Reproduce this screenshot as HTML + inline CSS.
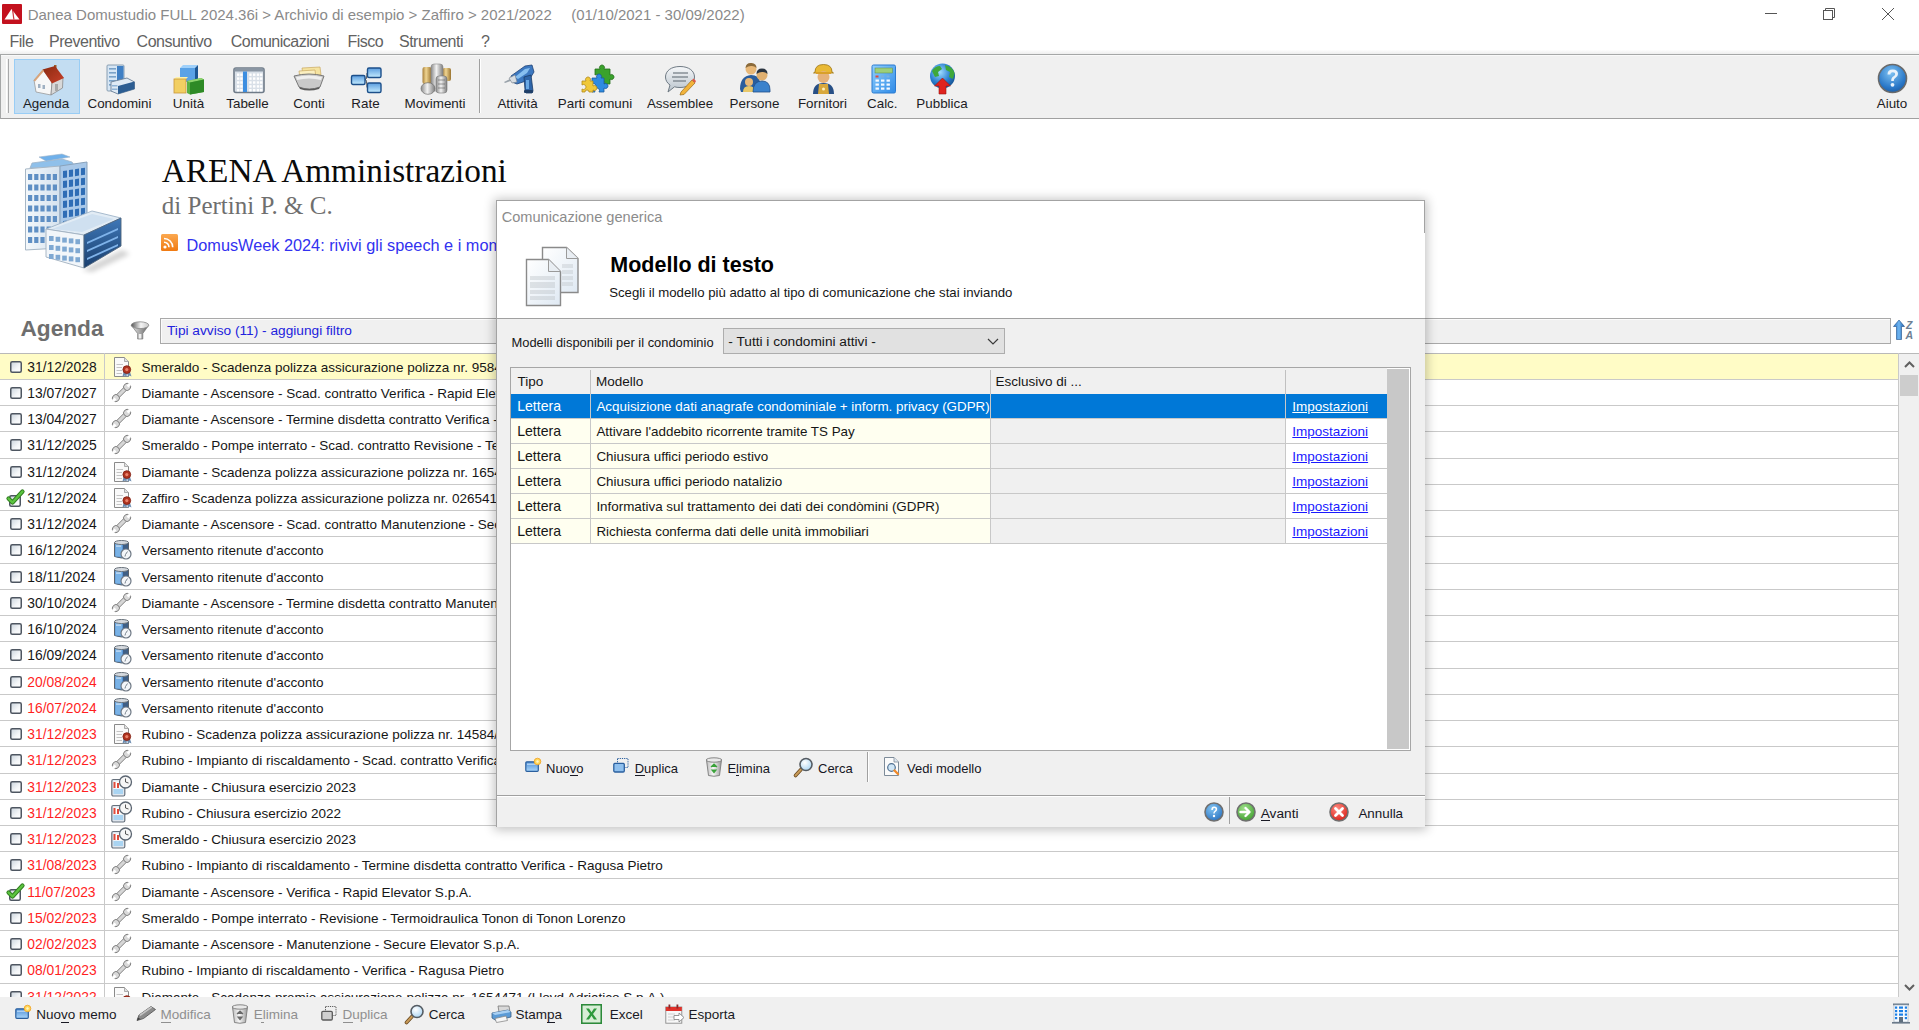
<!DOCTYPE html><html><head><meta charset="utf-8"><style>
html,body{margin:0;padding:0;}
body{width:1919px;height:1030px;overflow:hidden;position:relative;background:#fff;font-family:"Liberation Sans", sans-serif;}
.t{position:absolute;white-space:nowrap;}
svg{overflow:visible}
</style></head><body>
<svg style="position:absolute;left:2px;top:4px" width="20" height="20" viewBox="0 0 20 20"><rect x="0" y="0" width="20" height="20" rx="1" fill="#c3111e"/><polygon points="2.5,15.5 9.5,5 17.5,15.5" fill="#fff"/><polygon points="10,6 11.2,6 12.5,15.5 11.3,15.5" fill="#c3111e" opacity="0.85"/></svg>
<div class="t" style="left:27.70px;top:7.30px;font-size:15px;line-height:15px;color:#8a8a8a;font-weight:400;font-family:'Liberation Sans', sans-serif;">Danea Domustudio FULL 2024.36i &gt; Archivio di esempio &gt; Zaffiro &gt; 2021/2022</div>
<div class="t" style="left:571.20px;top:7.30px;font-size:15px;line-height:15px;color:#8a8a8a;font-weight:400;font-family:'Liberation Sans', sans-serif;">(01/10/2021 - 30/09/2022)</div>
<div style="position:absolute;left:1765px;top:13px;width:12px;height:1px;background:#555"></div>
<svg style="position:absolute;left:1822px;top:7px" width="14" height="14" viewBox="0 0 14 14"><rect x="1.5" y="3.5" width="9" height="9" fill="none" stroke="#555" stroke-width="1"/><polyline points="3.5,3.5 3.5,1.5 12.5,1.5 12.5,10.5 10.5,10.5" fill="none" stroke="#555" stroke-width="1"/></svg>
<svg style="position:absolute;left:1881px;top:7px" width="14" height="14" viewBox="0 0 14 14"><line x1="1" y1="1" x2="13" y2="13" stroke="#555" stroke-width="1"/><line x1="13" y1="1" x2="1" y2="13" stroke="#555" stroke-width="1"/></svg>
<div class="t" style="left:9.50px;top:33.66px;font-size:16px;line-height:16px;color:#626262;font-weight:400;font-family:'Liberation Sans', sans-serif;letter-spacing:-0.5px;">File</div>
<div class="t" style="left:49.10px;top:33.66px;font-size:16px;line-height:16px;color:#626262;font-weight:400;font-family:'Liberation Sans', sans-serif;letter-spacing:-0.5px;">Preventivo</div>
<div class="t" style="left:136.60px;top:33.66px;font-size:16px;line-height:16px;color:#626262;font-weight:400;font-family:'Liberation Sans', sans-serif;letter-spacing:-0.5px;">Consuntivo</div>
<div class="t" style="left:230.70px;top:33.66px;font-size:16px;line-height:16px;color:#626262;font-weight:400;font-family:'Liberation Sans', sans-serif;letter-spacing:-0.5px;">Comunicazioni</div>
<div class="t" style="left:347.50px;top:33.66px;font-size:16px;line-height:16px;color:#626262;font-weight:400;font-family:'Liberation Sans', sans-serif;letter-spacing:-0.5px;">Fisco</div>
<div class="t" style="left:399.00px;top:33.66px;font-size:16px;line-height:16px;color:#626262;font-weight:400;font-family:'Liberation Sans', sans-serif;letter-spacing:-0.5px;">Strumenti</div>
<div class="t" style="left:481.00px;top:33.66px;font-size:16px;line-height:16px;color:#626262;font-weight:400;font-family:'Liberation Sans', sans-serif;letter-spacing:-0.5px;">?</div>
<div style="position:absolute;left:0px;top:50px;width:1919px;height:4px;background:linear-gradient(#fdfdfd,#eeeeee)"></div>
<div style="position:absolute;left:0px;top:54px;width:1919px;height:1px;background:#a5a7a7"></div>
<div style="position:absolute;left:0px;top:55px;width:1919px;height:63px;background:#f0f0f0"></div>
<div style="position:absolute;left:0px;top:55px;width:1919px;height:1px;background:#f9f9f9"></div>
<div style="position:absolute;left:0px;top:118px;width:1919px;height:1px;background:#a0a0a0"></div>
<div style="position:absolute;left:0px;top:54px;width:1px;height:65px;background:#a5a7a7"></div>
<div style="position:absolute;left:6px;top:59px;width:1px;height:54px;background:#ffffff"></div>
<div style="position:absolute;left:8px;top:59px;width:1px;height:54px;background:#a8a9aa"></div>
<div style="position:absolute;left:14px;top:59px;width:66px;height:55px;background:#c3ddf2;box-sizing:border-box;border:1px solid #99cdf5"></div>
<div style="position:absolute;left:479px;top:59px;width:1px;height:54px;background:#a0a0a0"></div>
<div style="position:absolute;left:480px;top:59px;width:1px;height:54px;background:#ffffff"></div>
<div class="t" style="left:-14px;width:120px;text-align:center;top:97.26px;font-size:13.4px;line-height:13.4px;color:#1c1c24">Agenda</div>
<div class="t" style="left:59.5px;width:120px;text-align:center;top:97.26px;font-size:13.4px;line-height:13.4px;color:#1c1c24">Condomini</div>
<div class="t" style="left:128.5px;width:120px;text-align:center;top:97.26px;font-size:13.4px;line-height:13.4px;color:#1c1c24">Unità</div>
<div class="t" style="left:187.5px;width:120px;text-align:center;top:97.26px;font-size:13.4px;line-height:13.4px;color:#1c1c24">Tabelle</div>
<div class="t" style="left:249px;width:120px;text-align:center;top:97.26px;font-size:13.4px;line-height:13.4px;color:#1c1c24">Conti</div>
<div class="t" style="left:305.5px;width:120px;text-align:center;top:97.26px;font-size:13.4px;line-height:13.4px;color:#1c1c24">Rate</div>
<div class="t" style="left:375px;width:120px;text-align:center;top:97.26px;font-size:13.4px;line-height:13.4px;color:#1c1c24">Movimenti</div>
<div class="t" style="left:457.5px;width:120px;text-align:center;top:97.26px;font-size:13.4px;line-height:13.4px;color:#1c1c24">Attività</div>
<div class="t" style="left:535px;width:120px;text-align:center;top:97.26px;font-size:13.4px;line-height:13.4px;color:#1c1c24">Parti comuni</div>
<div class="t" style="left:620px;width:120px;text-align:center;top:97.26px;font-size:13.4px;line-height:13.4px;color:#1c1c24">Assemblee</div>
<div class="t" style="left:694.5px;width:120px;text-align:center;top:97.26px;font-size:13.4px;line-height:13.4px;color:#1c1c24">Persone</div>
<div class="t" style="left:762.5px;width:120px;text-align:center;top:97.26px;font-size:13.4px;line-height:13.4px;color:#1c1c24">Fornitori</div>
<div class="t" style="left:822.3px;width:120px;text-align:center;top:97.26px;font-size:13.4px;line-height:13.4px;color:#1c1c24">Calc.</div>
<div class="t" style="left:882px;width:120px;text-align:center;top:97.26px;font-size:13.4px;line-height:13.4px;color:#1c1c24">Pubblica</div>
<div class="t" style="left:1832px;width:120px;text-align:center;top:97.26px;font-size:13.4px;line-height:13.4px;color:#1c1c24">Aiuto</div>
<svg style="position:absolute;left:33px;top:64px" width="32" height="32" viewBox="0 0 32 32"><defs><linearGradient id="roof" x1="0" y1="0" x2="1" y2="1"><stop offset="0" stop-color="#8a2a10"/><stop offset="1" stop-color="#c8402a"/></linearGradient></defs><rect x="21" y="1" width="2.5" height="6" fill="#9b5b2a"/><polygon points="1,16 10,6 19,18 18,31 3,28" fill="#f7f7f7" stroke="#9a9a9a" stroke-width="0.8"/><polygon points="19,18 30,13 29.5,24 18,31" fill="#d8d8d8" stroke="#8a8a8a" stroke-width="0.8"/><polygon points="9.5,5.5 22,2 31,14 19,19.5" fill="url(#roof)"/><polygon points="0.5,16.5 9.5,5.5 11,7 2,17.5" fill="#d9a47a"/><rect x="5" y="20" width="2.5" height="4" fill="#9fb0c2"/><rect x="9.5" y="21" width="2.5" height="4" fill="#9fb0c2"/><rect x="22" y="20" width="3" height="7" fill="#a8a8a8"/></svg>
<svg style="position:absolute;left:106px;top:63px" width="29" height="32" viewBox="0 0 29 32"><rect x="1" y="2" width="17" height="26" rx="1" fill="#d6e6f5" stroke="#7f95aa" stroke-width="0.9"/><rect x="11" y="3" width="6.5" height="24" fill="#3f7fc4"/><g fill="#7aa2c8"><rect x="3" y="5" width="7" height="1.6"/><rect x="3" y="9" width="7" height="1.6"/><rect x="3" y="13" width="7" height="1.6"/><rect x="3" y="17" width="7" height="1.6"/><rect x="3" y="21" width="7" height="1.6"/></g><polygon points="5,19 21,15 28.5,19 28.5,26 12,31 5,28" fill="#dfeaf5" stroke="#6b8097" stroke-width="0.9"/><polygon points="12,23 28.5,18.5 28.5,26 12,31" fill="#2c5d92"/><g fill="#8fb3d6"><rect x="6" y="22" width="5.5" height="1.5"/><rect x="6" y="25.5" width="5.5" height="1.5"/></g></svg>
<svg style="position:absolute;left:173px;top:64px" width="32" height="31" viewBox="0 0 32 31"><polygon points="7,4 10,1 25,1 22,4" fill="#9fd0fa"/><rect x="7" y="4" width="15" height="14" fill="#5aa2e6"/><polygon points="22,4 25,1 25,15 22,18" fill="#1d5794"/><polygon points="1,15 3,13 15,13 13,15" fill="#fff2a8"/><rect x="1" y="15" width="12" height="14" fill="#f2cf62" stroke="#c9963a" stroke-width="0.8"/><polygon points="14,17 28,14 31,15.5 31,28 17,30.5 14,29" fill="#57b043"/><polygon points="14,17 28,14 31,15.5 17,18.5" fill="#8ed46f"/><polygon points="17,18.5 31,15.5 31,28 17,30.5" fill="#2e8a26"/></svg>
<svg style="position:absolute;left:233px;top:67px" width="32" height="27" viewBox="0 0 32 27"><rect x="1" y="1" width="30" height="24.5" rx="2" fill="#d9e0e8" stroke="#6f7b88" stroke-width="1.6"/><rect x="1.5" y="1.5" width="29" height="3" fill="#8a96a3"/><rect x="10" y="4.5" width="4" height="20.5" fill="#3d8ee0"/><g fill="#ffffff"><rect x="4" y="6.5" width="2.4" height="2.4"/><rect x="4" y="10.4" width="2.4" height="2.4"/><rect x="4" y="14.3" width="2.4" height="2.4"/><rect x="4" y="18.2" width="2.4" height="2.4"/><rect x="4" y="22" width="2.4" height="2.4"/><rect x="7.2" y="6.5" width="2.4" height="2.4"/><rect x="7.2" y="10.4" width="2.4" height="2.4"/><rect x="7.2" y="14.3" width="2.4" height="2.4"/><rect x="7.2" y="18.2" width="2.4" height="2.4"/><rect x="7.2" y="22" width="2.4" height="2.4"/><rect x="16.2" y="6.5" width="2.4" height="2.4"/><rect x="16.2" y="10.4" width="2.4" height="2.4"/><rect x="16.2" y="14.3" width="2.4" height="2.4"/><rect x="16.2" y="18.2" width="2.4" height="2.4"/><rect x="16.2" y="22" width="2.4" height="2.4"/><rect x="20" y="6.5" width="2.4" height="2.4"/><rect x="20" y="10.4" width="2.4" height="2.4"/><rect x="20" y="14.3" width="2.4" height="2.4"/><rect x="20" y="18.2" width="2.4" height="2.4"/><rect x="20" y="22" width="2.4" height="2.4"/><rect x="23.8" y="6.5" width="2.4" height="2.4"/><rect x="23.8" y="10.4" width="2.4" height="2.4"/><rect x="23.8" y="14.3" width="2.4" height="2.4"/><rect x="23.8" y="18.2" width="2.4" height="2.4"/><rect x="23.8" y="22" width="2.4" height="2.4"/><rect x="27" y="6.5" width="2.4" height="2.4"/><rect x="27" y="10.4" width="2.4" height="2.4"/><rect x="27" y="14.3" width="2.4" height="2.4"/><rect x="27" y="18.2" width="2.4" height="2.4"/><rect x="27" y="22" width="2.4" height="2.4"/></g></svg>
<svg style="position:absolute;left:293px;top:66px" width="32" height="25" viewBox="0 0 32 25"><polygon points="9,2 27,1 28,9 10,10" fill="#f5e3a0" stroke="#c8a860" stroke-width="0.7"/><polygon points="6,5 22,4 23,12 7,13" fill="#fbefc0" stroke="#c8a860" stroke-width="0.7"/><path d="M1 10 Q16 6 31 10 L27 21 Q16 25 6 21 Z" fill="#c9c9c9" stroke="#6e6e6e" stroke-width="0.9"/><path d="M3 11 Q16 8 29 11 L28 14 Q16 11 4 14 Z" fill="#efefef"/><path d="M6 21 Q16 25 27 21 L26 23 Q16 26 7 23 Z" fill="#5a5a5a"/></svg>
<svg style="position:absolute;left:350px;top:66px" width="33" height="28" viewBox="0 0 33 28"><path d="M15 13.5 Q17 13.5 17 7 L18 7 M15 13.5 Q17 13.5 17 21.5 L18 21.5" stroke="#4a4a4a" stroke-width="1" fill="none"/><defs><linearGradient id="rb" x1="0" y1="0" x2="0" y2="1"><stop offset="0" stop-color="#5b9ddf"/><stop offset="1" stop-color="#c5ecff"/></linearGradient></defs><rect x="1.5" y="9.5" width="13.5" height="9" rx="1.5" fill="url(#rb)" stroke="#1c4f8a" stroke-width="1.4"/><rect x="17.5" y="2" width="13.5" height="9.5" rx="1.5" fill="url(#rb)" stroke="#1c4f8a" stroke-width="1.4"/><rect x="17.5" y="17" width="13.5" height="9.5" rx="1.5" fill="url(#rb)" stroke="#1c4f8a" stroke-width="1.4"/></svg>
<svg style="position:absolute;left:420px;top:63px" width="32" height="32" viewBox="0 0 32 32"><defs><linearGradient id="gold" x1="0" y1="0" x2="1" y2="0"><stop offset="0" stop-color="#a77f3a"/><stop offset="0.4" stop-color="#f0d592"/><stop offset="1" stop-color="#9a7430"/></linearGradient><linearGradient id="silv" x1="0" y1="0" x2="1" y2="0"><stop offset="0" stop-color="#8a8a8a"/><stop offset="0.45" stop-color="#f2f2f2"/><stop offset="1" stop-color="#7c7c7c"/></linearGradient></defs><rect x="2.5" y="4" width="9" height="17" rx="2" fill="url(#gold)"/><rect x="22.5" y="5" width="8.5" height="13" rx="2" fill="url(#gold)"/><rect x="11" y="1" width="12" height="27" rx="3" fill="url(#silv)" stroke="#8a8a8a" stroke-width="0.6"/><rect x="16" y="13" width="11" height="17" rx="3" fill="url(#silv)" stroke="#777" stroke-width="0.6"/><g stroke="#555" stroke-width="0.8" opacity="0.7"><line x1="18" y1="17" x2="25" y2="17"/><line x1="18" y1="21" x2="25" y2="21"/><line x1="18" y1="25" x2="25" y2="25"/></g><ellipse cx="8" cy="25.5" rx="7" ry="5.8" fill="url(#silv)" stroke="#6e6e6e" stroke-width="0.7"/></svg>
<svg style="position:absolute;left:503px;top:64px" width="32" height="30" viewBox="0 0 32 30"><polygon points="1,18 9,14 10,16 2,19" fill="#9aa3ab"/><polygon points="8,12 22,2 29,1 31,8 26,16 14,20 9,18" fill="#3c78c0" stroke="#1f4377" stroke-width="0.8"/><polygon points="12,13 22,5 27,4 24,9 15,15" fill="#87bff0"/><path d="M6 14 L12 11 L14 18 L9 19 Z" fill="#d8dde2" stroke="#7a838c" stroke-width="0.6"/><polygon points="21,13 28,11 30,27 29,29 23,29 22,26" fill="#2f66aa" stroke="#1b3b66" stroke-width="0.8"/><rect x="23" y="16" width="3" height="9" fill="#6aa8e4"/><rect x="21" y="26" width="9" height="3" rx="1" fill="#1f3f68"/></svg>
<svg style="position:absolute;left:580px;top:66px" width="33" height="28" viewBox="0 0 33 28"><path d="M15 3 h5 a2.5 2.5 0 1 1 4 0 h6 v6 a2.5 2.5 0 1 1 0 4 v5 h-6 a2.5 2.5 0 1 0 -4 0 h-5 v-5 a2.5 2.5 0 1 0 0 -4 Z" fill="#3aa22c" stroke="#23701a" stroke-width="0.8"/><path d="M12 12 h5 a2.5 2.5 0 1 1 4 0 h3 v6 a2.5 2.5 0 1 1 0 4 v4 h-5 a2.5 2.5 0 1 0 -4 0 h-3 v-4 a2.5 2.5 0 1 0 0 -4 Z" fill="#2f8be0" stroke="#1a5a9e" stroke-width="0.8"/><path d="M2 15 h4 a2.5 2.5 0 1 1 4 0 h3 v5 a2.5 2.5 0 1 1 0 4 v2 h-4 a2 2 0 1 0 -4 0 h-3 v-3 a2.5 2.5 0 1 0 0 -4 Z" fill="#f0c838" stroke="#b28a1a" stroke-width="0.8"/></svg>
<svg style="position:absolute;left:664px;top:65px" width="32" height="30" viewBox="0 0 32 30"><defs><linearGradient id="bub" x1="0" y1="0" x2="0" y2="1"><stop offset="0" stop-color="#f5f7f9"/><stop offset="1" stop-color="#b9c3cc"/></linearGradient></defs><path d="M16 1.5 C25 1.5 30.5 6 30.5 12 C30.5 18 25 22.5 16 22.5 C14 22.5 12 22.3 10.5 21.8 L4 27 L6 20 C3 18 1.5 15 1.5 12 C1.5 6 7 1.5 16 1.5 Z" fill="url(#bub)" stroke="#6f7a84" stroke-width="1"/><g stroke="#6e7780" stroke-width="1.2"><line x1="9" y1="8" x2="24" y2="8"/><line x1="8" y1="12" x2="24" y2="12"/><line x1="9" y1="16" x2="22" y2="16"/></g><polygon points="17,27 28,15 31,18 20,29.5 16,30" fill="#f2b33a" stroke="#9a6a16" stroke-width="0.7"/><polygon points="28,15 29.5,13.5 32,16 31,18" fill="#e05a4a"/></svg>
<svg style="position:absolute;left:739px;top:62px" width="32" height="32" viewBox="0 0 32 32"><circle cx="12" cy="7" r="5.5" fill="#e8b878"/><path d="M6.5 6 Q7 0.5 12.5 1 Q17.5 1.5 17.5 6 Q15 3.5 12 4 Q9 4 6.5 6Z" fill="#8a6a3a"/><path d="M1 27 Q1 14 12 13 Q20 13 21 20 L21 30 L2 30 Z" fill="#2a5d9c"/><circle cx="10" cy="20" r="4" fill="#e8b878"/><path d="M4 30 Q4 24 10 24 Q16 24 16 30 Z" fill="#e8c86a"/><circle cx="23" cy="13" r="5.5" fill="#e0b070"/><path d="M17.5 12 Q17.5 6.5 23 6.5 Q28.5 6.5 28.5 12 Q26 9.5 23 10 Q20 10 17.5 12Z" fill="#2a3440"/><path d="M14 30 Q14 19 23 19 Q31 19 31 28 L31 30 Z" fill="#3b82cc" stroke="#1f4f8a" stroke-width="0.8"/></svg>
<svg style="position:absolute;left:812px;top:63px" width="23" height="32" viewBox="0 0 23 32"><path d="M3 9 Q3 1.5 11.5 1.5 Q20 1.5 20 9 L21.5 10 L1.5 10 Z" fill="#e9b935" stroke="#9c7412" stroke-width="0.8"/><ellipse cx="11.5" cy="14" rx="6" ry="6" fill="#e6b27a"/><rect x="4" y="9" width="15" height="2" fill="#d9a02a"/><path d="M1 31 Q1 20 11.5 20 Q22 20 22 31 Z" fill="#274f86"/><path d="M6 31 L7 21 L16 21 L17 31 Z" fill="#d8a83c"/><circle cx="11.5" cy="26" r="1.5" fill="#fff2c0"/></svg>
<svg style="position:absolute;left:871px;top:64px" width="26" height="30" viewBox="0 0 26 30"><defs><linearGradient id="calc" x1="0" y1="0" x2="1" y2="1"><stop offset="0" stop-color="#8fd0ff"/><stop offset="1" stop-color="#2f8ae6"/></linearGradient></defs><rect x="1" y="1" width="23.5" height="28" rx="1.5" fill="url(#calc)" stroke="#2b7ad0" stroke-width="1"/><rect x="4" y="4" width="17.5" height="5" fill="#9ccf7a" stroke="#5f8a4a" stroke-width="0.5"/><rect x="4.5" y="11.5" width="3" height="2" fill="#e04a3a"/><rect x="10" y="11.5" width="3" height="2" fill="#7ab0e0"/><rect x="15.5" y="11.5" width="3" height="2" fill="#7ab0e0"/><g fill="#f4f9ff"><rect x="4.5" y="15.5" width="3.4" height="2.2"/><rect x="4.5" y="19.5" width="3.4" height="2.2"/><rect x="4.5" y="23.5" width="3.4" height="2.2"/><rect x="10" y="15.5" width="3.4" height="2.2"/><rect x="10" y="19.5" width="3.4" height="2.2"/><rect x="10" y="23.5" width="3.4" height="2.2"/><rect x="15.5" y="15.5" width="3.4" height="2.2"/><rect x="15.5" y="19.5" width="3.4" height="2.2"/><rect x="15.5" y="23.5" width="3.4" height="2.2"/></g></svg>
<svg style="position:absolute;left:929px;top:63px" width="27" height="32" viewBox="0 0 27 32"><defs><radialGradient id="glb" cx="0.4" cy="0.35" r="0.7"><stop offset="0" stop-color="#9fdcff"/><stop offset="0.6" stop-color="#2a7fd0"/><stop offset="1" stop-color="#16508e"/></radialGradient></defs><circle cx="13.5" cy="13" r="12.5" fill="url(#glb)"/><path d="M3 8 Q6 3 11 3 L13 6 L9 9 L10 13 L6 14 Z" fill="#3fa83a"/><path d="M16 2 Q23 3 25.5 10 L24 16 L20 14 L21 9 L17 7 Z" fill="#3fa83a"/><path d="M11 17 L15 16 L17 21 L13 24 Z" fill="#3fa83a"/><polygon points="13.5,15 21.5,23 17,23 17,31 10,31 10,23 5.5,23" fill="#e0231e" stroke="#9a1410" stroke-width="0.6"/></svg>
<svg style="position:absolute;left:1877px;top:63px" width="31" height="31" viewBox="0 0 31 31"><defs><radialGradient id="hlp" cx="0.45" cy="0.3" r="0.75"><stop offset="0" stop-color="#7ec2f2"/><stop offset="0.7" stop-color="#2a78c8"/><stop offset="1" stop-color="#1b5aa0"/></radialGradient></defs><circle cx="15.5" cy="15.5" r="14" fill="url(#hlp)" stroke="#6a6a6a" stroke-width="1.6"/><path d="M10.5 11.5 Q10.5 6.5 15.8 6.5 Q21 6.5 21 11 Q21 13.8 18 15.3 Q16.8 16 16.8 18 L14.2 18 Q14 14.6 16.6 13.2 Q18.2 12.3 18.2 11 Q18.2 9.2 15.8 9.2 Q13.4 9.2 13.3 11.5 Z" fill="#e8f2fb"/><circle cx="15.5" cy="21.8" r="1.9" fill="#e8f2fb"/></svg>
<svg style="position:absolute;left:22px;top:154px" width="110" height="118" viewBox="0 0 110 118"><defs><linearGradient id="bw" x1="0" y1="0" x2="1" y2="0"><stop offset="0" stop-color="#f4f8fb"/><stop offset="1" stop-color="#d5e2ee"/></linearGradient><linearGradient id="bs" x1="0" y1="0" x2="0" y2="1"><stop offset="0" stop-color="#3f78b8"/><stop offset="1" stop-color="#1a3f6e"/></linearGradient><filter id="shb" x="-30%" y="-50%" width="160%" height="200%"><feGaussianBlur stdDeviation="2.5"/></filter></defs><polygon points="60,116 100,96 108,100 70,118" fill="#000" opacity="0.18" filter="url(#shb)"/><polygon points="10,9 40,5 50,8 52,11 42,13 8,14" fill="#8fc0ea" stroke="#9fb4c8" stroke-width="0.8"/><polygon points="17,3 40,0 48,3 24,7" fill="#6fb0ea" stroke="#9fb4c8" stroke-width="0.6"/><polygon points="3.5,15 38,12 38,94 3.5,96" fill="url(#bw)" stroke="#a7b7c6" stroke-width="1"/><polygon points="38,12 65,8 65,76 38,82" fill="#a9c8e8" stroke="#8aa3bc" stroke-width="1"/><rect x="6.0" y="20.0" width="4.2" height="6" fill="#5f8fc4"/><rect x="6.0" y="30.5" width="4.2" height="6" fill="#5f8fc4"/><rect x="6.0" y="41.0" width="4.2" height="6" fill="#5f8fc4"/><rect x="6.0" y="51.5" width="4.2" height="6" fill="#5f8fc4"/><rect x="6.0" y="62.0" width="4.2" height="6" fill="#5f8fc4"/><rect x="6.0" y="72.5" width="4.2" height="6" fill="#5f8fc4"/><rect x="6.0" y="83.0" width="4.2" height="6" fill="#5f8fc4"/><rect x="12.2" y="20.0" width="4.2" height="6" fill="#5f8fc4"/><rect x="12.2" y="30.5" width="4.2" height="6" fill="#5f8fc4"/><rect x="12.2" y="41.0" width="4.2" height="6" fill="#5f8fc4"/><rect x="12.2" y="51.5" width="4.2" height="6" fill="#5f8fc4"/><rect x="12.2" y="62.0" width="4.2" height="6" fill="#5f8fc4"/><rect x="12.2" y="72.5" width="4.2" height="6" fill="#5f8fc4"/><rect x="12.2" y="83.0" width="4.2" height="6" fill="#5f8fc4"/><rect x="18.4" y="20.0" width="4.2" height="6" fill="#5f8fc4"/><rect x="18.4" y="30.5" width="4.2" height="6" fill="#5f8fc4"/><rect x="18.4" y="41.0" width="4.2" height="6" fill="#5f8fc4"/><rect x="18.4" y="51.5" width="4.2" height="6" fill="#5f8fc4"/><rect x="18.4" y="62.0" width="4.2" height="6" fill="#5f8fc4"/><rect x="18.4" y="72.5" width="4.2" height="6" fill="#5f8fc4"/><rect x="18.4" y="83.0" width="4.2" height="6" fill="#5f8fc4"/><rect x="24.6" y="20.0" width="4.2" height="6" fill="#5f8fc4"/><rect x="24.6" y="30.5" width="4.2" height="6" fill="#5f8fc4"/><rect x="24.6" y="41.0" width="4.2" height="6" fill="#5f8fc4"/><rect x="24.6" y="51.5" width="4.2" height="6" fill="#5f8fc4"/><rect x="24.6" y="62.0" width="4.2" height="6" fill="#5f8fc4"/><rect x="24.6" y="72.5" width="4.2" height="6" fill="#5f8fc4"/><rect x="24.6" y="83.0" width="4.2" height="6" fill="#5f8fc4"/><rect x="30.8" y="20.0" width="4.2" height="6" fill="#5f8fc4"/><rect x="30.8" y="30.5" width="4.2" height="6" fill="#5f8fc4"/><rect x="30.8" y="41.0" width="4.2" height="6" fill="#5f8fc4"/><rect x="30.8" y="51.5" width="4.2" height="6" fill="#5f8fc4"/><rect x="30.8" y="62.0" width="4.2" height="6" fill="#5f8fc4"/><rect x="30.8" y="72.5" width="4.2" height="6" fill="#5f8fc4"/><rect x="30.8" y="83.0" width="4.2" height="6" fill="#5f8fc4"/><polygon points="41,17.0 45,16.4 45,23.4 41,24.0" fill="#2f6db5"/><polygon points="41,27.0 45,26.4 45,33.4 41,34.0" fill="#2f6db5"/><polygon points="41,37.0 45,36.4 45,43.4 41,44.0" fill="#2f6db5"/><polygon points="41,47.0 45,46.4 45,53.4 41,54.0" fill="#2f6db5"/><polygon points="41,57.0 45,56.4 45,63.4 41,64.0" fill="#2f6db5"/><polygon points="41,67.0 45,66.4 45,73.4 41,74.0" fill="#2f6db5"/><polygon points="47,16.1 51,15.5 51,22.5 47,23.1" fill="#2f6db5"/><polygon points="47,26.1 51,25.5 51,32.5 47,33.1" fill="#2f6db5"/><polygon points="47,36.1 51,35.5 51,42.5 47,43.1" fill="#2f6db5"/><polygon points="47,46.1 51,45.5 51,52.5 47,53.1" fill="#2f6db5"/><polygon points="47,56.1 51,55.5 51,62.5 47,63.1" fill="#2f6db5"/><polygon points="47,66.1 51,65.5 51,72.5 47,73.1" fill="#2f6db5"/><polygon points="53,15.2 57,14.6 57,21.6 53,22.2" fill="#2f6db5"/><polygon points="53,25.2 57,24.6 57,31.6 53,32.2" fill="#2f6db5"/><polygon points="53,35.2 57,34.6 57,41.6 53,42.2" fill="#2f6db5"/><polygon points="53,45.2 57,44.6 57,51.6 53,52.2" fill="#2f6db5"/><polygon points="53,55.2 57,54.6 57,61.6 53,62.2" fill="#2f6db5"/><polygon points="53,65.2 57,64.6 57,71.6 53,72.2" fill="#2f6db5"/><polygon points="59,14.3 63,13.7 63,20.7 59,21.3" fill="#2f6db5"/><polygon points="59,24.3 63,23.7 63,30.7 59,31.3" fill="#2f6db5"/><polygon points="59,34.3 63,33.7 63,40.7 59,41.3" fill="#2f6db5"/><polygon points="59,44.3 63,43.7 63,50.7 59,51.3" fill="#2f6db5"/><polygon points="59,54.3 63,53.7 63,60.7 59,61.3" fill="#2f6db5"/><polygon points="59,64.3 63,63.7 63,70.7 59,71.3" fill="#2f6db5"/><polygon points="24,75 70,57 99,64 62,81" fill="#e2ecf5" stroke="#9fb4c8" stroke-width="0.9"/><polygon points="30,75 70,60 92,65 60,78" fill="#cfe0f0"/><polygon points="24,75 62,81 62,114 24,103" fill="#f2f6fa" stroke="#a0b0c0" stroke-width="0.9"/><polygon points="62,81 99,64 99,92 62,114" fill="url(#bs)" stroke="#4f647c" stroke-width="0.9"/><rect x="27.0" y="82.0" width="4.6" height="5" fill="#7fa8d2"/><rect x="27.0" y="91.0" width="4.6" height="5" fill="#7fa8d2"/><rect x="27.0" y="100.0" width="4.6" height="5" fill="#7fa8d2"/><rect x="33.6" y="82.8" width="4.6" height="5" fill="#7fa8d2"/><rect x="33.6" y="91.8" width="4.6" height="5" fill="#7fa8d2"/><rect x="33.6" y="100.8" width="4.6" height="5" fill="#7fa8d2"/><rect x="40.2" y="83.6" width="4.6" height="5" fill="#7fa8d2"/><rect x="40.2" y="92.6" width="4.6" height="5" fill="#7fa8d2"/><rect x="40.2" y="101.6" width="4.6" height="5" fill="#7fa8d2"/><rect x="46.8" y="84.4" width="4.6" height="5" fill="#7fa8d2"/><rect x="46.8" y="93.4" width="4.6" height="5" fill="#7fa8d2"/><rect x="46.8" y="102.4" width="4.6" height="5" fill="#7fa8d2"/><rect x="53.4" y="85.2" width="4.6" height="5" fill="#7fa8d2"/><rect x="53.4" y="94.2" width="4.6" height="5" fill="#7fa8d2"/><rect x="53.4" y="103.2" width="4.6" height="5" fill="#7fa8d2"/><polygon points="65,88 96,74 96,76 65,90" fill="#7fb3ea"/><polygon points="65,96 96,82 96,84 65,98" fill="#7fb3ea"/><polygon points="65,104 96,90 96,92 65,106" fill="#7fb3ea"/></svg>
<div class="t" style="left:161.80px;top:153.71px;font-size:33.3px;line-height:33.3px;color:#0a0a0a;font-weight:400;font-family:'Liberation Serif', serif;">ARENA Amministrazioni</div>
<div class="t" style="left:161.80px;top:193.06px;font-size:25px;line-height:25px;color:#6f6f6f;font-weight:400;font-family:'Liberation Serif', serif;">di Pertini P. &amp; C.</div>
<svg style="position:absolute;left:161px;top:234px" width="17" height="17" viewBox="0 0 17 17"><defs><linearGradient id="rss" x1="0" y1="0" x2="0" y2="1"><stop offset="0" stop-color="#fba84f"/><stop offset="1" stop-color="#f07a12"/></linearGradient></defs><rect x="0" y="0" width="17" height="17" rx="1.5" fill="url(#rss)"/><circle cx="4" cy="13" r="1.6" fill="#fff"/><path d="M3 8.2 A5 5 0 0 1 8 13.2" stroke="#fff" stroke-width="1.6" fill="none"/><path d="M3 4.5 A8.7 8.7 0 0 1 11.7 13.2" stroke="#fff" stroke-width="1.6" fill="none"/></svg>
<div class="t" style="left:186.50px;top:236.70px;font-size:16.3px;line-height:16.3px;color:#3232f0;font-weight:400;font-family:'Liberation Sans', sans-serif;">DomusWeek 2024: rivivi gli speech e i momenti più belli</div>
<div class="t" style="left:20.40px;top:316.88px;font-size:22.7px;line-height:22.7px;color:#6e6e6e;font-weight:700;font-family:'Liberation Sans', sans-serif;">Agenda</div>
<svg style="position:absolute;left:130px;top:320px" width="20" height="20" viewBox="0 0 20 20"><defs><linearGradient id="fun" x1="0" y1="0" x2="1" y2="0"><stop offset="0" stop-color="#555"/><stop offset="0.55" stop-color="#f4f4f4"/><stop offset="1" stop-color="#c8c8c8"/></linearGradient><linearGradient id="fun2" x1="0" y1="0" x2="1" y2="0"><stop offset="0" stop-color="#e8e8e8"/><stop offset="0.6" stop-color="#9a9a9a"/><stop offset="1" stop-color="#606060"/></linearGradient></defs><path d="M1.5 5.5 L18.5 5.5 L12.8 13.5 L12.8 19 L7.6 19 L7.6 13.5 Z" fill="url(#fun2)" stroke="#777" stroke-width="0.7"/><ellipse cx="10" cy="5.2" rx="8.8" ry="3.4" fill="url(#fun)" stroke="#8a8a8a" stroke-width="0.8"/><rect x="8.8" y="14" width="2.6" height="4.5" fill="#f0f0f0"/></svg>
<div style="position:absolute;left:160px;top:318px;width:1731px;height:26px;background:#f0f0f0;box-sizing:border-box;border:1px solid #a9a9a9;box-shadow:inset 1px 1px 0 #fbfbfb"></div>
<div class="t" style="left:167.00px;top:324.40px;font-size:13.7px;line-height:13.7px;color:#2222dd;font-weight:400;font-family:'Liberation Sans', sans-serif;">Tipi avviso (11) - aggiungi filtro</div>
<div style="position:absolute;left:0px;top:354px;width:1898px;height:25px;background:#fffcc6"></div>
<div style="position:absolute;left:0px;top:353px;width:1919px;height:1px;background:#b9b9b9"></div>
<div style="position:absolute;left:0px;top:379px;width:1898px;height:1px;background:#c9c9c9"></div>
<div style="position:absolute;left:0px;top:405px;width:1898px;height:1px;background:#c9c9c9"></div>
<div style="position:absolute;left:0px;top:431px;width:1898px;height:1px;background:#c9c9c9"></div>
<div style="position:absolute;left:0px;top:458px;width:1898px;height:1px;background:#c9c9c9"></div>
<div style="position:absolute;left:0px;top:484px;width:1898px;height:1px;background:#c9c9c9"></div>
<div style="position:absolute;left:0px;top:510px;width:1898px;height:1px;background:#c9c9c9"></div>
<div style="position:absolute;left:0px;top:536px;width:1898px;height:1px;background:#c9c9c9"></div>
<div style="position:absolute;left:0px;top:563px;width:1898px;height:1px;background:#c9c9c9"></div>
<div style="position:absolute;left:0px;top:589px;width:1898px;height:1px;background:#c9c9c9"></div>
<div style="position:absolute;left:0px;top:615px;width:1898px;height:1px;background:#c9c9c9"></div>
<div style="position:absolute;left:0px;top:641px;width:1898px;height:1px;background:#c9c9c9"></div>
<div style="position:absolute;left:0px;top:668px;width:1898px;height:1px;background:#c9c9c9"></div>
<div style="position:absolute;left:0px;top:694px;width:1898px;height:1px;background:#c9c9c9"></div>
<div style="position:absolute;left:0px;top:720px;width:1898px;height:1px;background:#c9c9c9"></div>
<div style="position:absolute;left:0px;top:746px;width:1898px;height:1px;background:#c9c9c9"></div>
<div style="position:absolute;left:0px;top:773px;width:1898px;height:1px;background:#c9c9c9"></div>
<div style="position:absolute;left:0px;top:799px;width:1898px;height:1px;background:#c9c9c9"></div>
<div style="position:absolute;left:0px;top:825px;width:1898px;height:1px;background:#c9c9c9"></div>
<div style="position:absolute;left:0px;top:851px;width:1898px;height:1px;background:#c9c9c9"></div>
<div style="position:absolute;left:0px;top:878px;width:1898px;height:1px;background:#c9c9c9"></div>
<div style="position:absolute;left:0px;top:904px;width:1898px;height:1px;background:#c9c9c9"></div>
<div style="position:absolute;left:0px;top:930px;width:1898px;height:1px;background:#c9c9c9"></div>
<div style="position:absolute;left:0px;top:956px;width:1898px;height:1px;background:#c9c9c9"></div>
<div style="position:absolute;left:0px;top:983px;width:1898px;height:1px;background:#c9c9c9"></div>
<div style="position:absolute;left:0px;top:1009px;width:1898px;height:1px;background:#c9c9c9"></div>
<div style="position:absolute;left:104px;top:353px;width:1px;height:644px;background:#c9c9c9"></div>
<div style="position:absolute;left:1898px;top:353px;width:1px;height:644px;background:#c9c9c9"></div>
<svg style="position:absolute;left:10px;top:360.5px" width="12" height="12" viewBox="0 0 12 12"><defs><linearGradient id="cbg" x1="0" y1="0" x2="1" y2="1"><stop offset="0" stop-color="#c9d3dc"/><stop offset="0.6" stop-color="#f4f6f8"/><stop offset="1" stop-color="#ffffff"/></linearGradient></defs><rect x="0.75" y="0.75" width="10.5" height="10.5" rx="1.5" fill="url(#cbg)" stroke="#4e5661" stroke-width="1.5"/></svg>
<div class="t" style="left:27.30px;top:360.58px;font-size:13.85px;line-height:13.85px;color:#161616;font-weight:400;font-family:'Liberation Sans', sans-serif;">31/12/2028</div>
<svg style="position:absolute;left:114px;top:356.5px" width="18" height="20" viewBox="0 0 18 20"><path d="M0.5 0.5 H10.5 L14.5 4.5 V19.5 H0.5 Z" fill="#fafafa" stroke="#8a8a8a" stroke-width="1"/><path d="M10.5 0.5 V4.5 H14.5" fill="#e0e0e0" stroke="#9a9a9a" stroke-width="0.8"/><g stroke="#c4c4c4" stroke-width="1"><line x1="2.5" y1="7.5" x2="9" y2="7.5"/><line x1="2.5" y1="10.5" x2="8" y2="10.5"/><line x1="2.5" y1="13.5" x2="8" y2="13.5"/><line x1="2.5" y1="16.5" x2="8" y2="16.5"/></g><path d="M9.5 15 L8.5 19.5 L11 18.5 L12.5 20 L13 15.5 Z M13 15.5 L14 20 L15.5 18.5 L17.5 19.5 L16 15 Z" fill="#6d8db0"/><circle cx="12.8" cy="12.6" r="3.9" fill="#b0341f" stroke="#7e1d10" stroke-width="0.8"/><circle cx="12.8" cy="12.6" r="1.6" fill="#e9826b"/></svg>
<div class="t" style="left:141.50px;top:360.87px;font-size:13.5px;line-height:13.5px;color:#161616;font-weight:400;font-family:'Liberation Sans', sans-serif;">Smeraldo - Scadenza polizza assicurazione polizza nr. 95841 (Generali Assicurazioni S.p.A.)</div>
<svg style="position:absolute;left:10px;top:386.5px" width="12" height="12" viewBox="0 0 12 12"><defs><linearGradient id="cbg" x1="0" y1="0" x2="1" y2="1"><stop offset="0" stop-color="#c9d3dc"/><stop offset="0.6" stop-color="#f4f6f8"/><stop offset="1" stop-color="#ffffff"/></linearGradient></defs><rect x="0.75" y="0.75" width="10.5" height="10.5" rx="1.5" fill="url(#cbg)" stroke="#4e5661" stroke-width="1.5"/></svg>
<div class="t" style="left:27.30px;top:386.58px;font-size:13.85px;line-height:13.85px;color:#161616;font-weight:400;font-family:'Liberation Sans', sans-serif;">13/07/2027</div>
<svg style="position:absolute;left:111px;top:381.5px" width="21" height="21" viewBox="0 0 21 21"><g transform="rotate(-45 10.5 10.5)"><rect x="3.5" y="8.6" width="14" height="3.8" fill="#d6d6d6" stroke="#7c7c7c" stroke-width="0.9"/><circle cx="2.6" cy="10.5" r="3.5" fill="#d9d9d9" stroke="#7c7c7c" stroke-width="0.9"/><circle cx="18.4" cy="10.5" r="3.5" fill="#d9d9d9" stroke="#7c7c7c" stroke-width="0.9"/><rect x="-1.5" y="9.2" width="3.5" height="2.6" fill="#ffffff"/><rect x="19" y="9.2" width="3.5" height="2.6" fill="#ffffff"/></g></svg>
<div class="t" style="left:141.50px;top:386.87px;font-size:13.5px;line-height:13.5px;color:#161616;font-weight:400;font-family:'Liberation Sans', sans-serif;">Diamante - Ascensore - Scad. contratto Verifica - Rapid Elevator S.p.A.</div>
<svg style="position:absolute;left:10px;top:412.5px" width="12" height="12" viewBox="0 0 12 12"><defs><linearGradient id="cbg" x1="0" y1="0" x2="1" y2="1"><stop offset="0" stop-color="#c9d3dc"/><stop offset="0.6" stop-color="#f4f6f8"/><stop offset="1" stop-color="#ffffff"/></linearGradient></defs><rect x="0.75" y="0.75" width="10.5" height="10.5" rx="1.5" fill="url(#cbg)" stroke="#4e5661" stroke-width="1.5"/></svg>
<div class="t" style="left:27.30px;top:412.58px;font-size:13.85px;line-height:13.85px;color:#161616;font-weight:400;font-family:'Liberation Sans', sans-serif;">13/04/2027</div>
<svg style="position:absolute;left:111px;top:407.5px" width="21" height="21" viewBox="0 0 21 21"><g transform="rotate(-45 10.5 10.5)"><rect x="3.5" y="8.6" width="14" height="3.8" fill="#d6d6d6" stroke="#7c7c7c" stroke-width="0.9"/><circle cx="2.6" cy="10.5" r="3.5" fill="#d9d9d9" stroke="#7c7c7c" stroke-width="0.9"/><circle cx="18.4" cy="10.5" r="3.5" fill="#d9d9d9" stroke="#7c7c7c" stroke-width="0.9"/><rect x="-1.5" y="9.2" width="3.5" height="2.6" fill="#ffffff"/><rect x="19" y="9.2" width="3.5" height="2.6" fill="#ffffff"/></g></svg>
<div class="t" style="left:141.50px;top:412.87px;font-size:13.5px;line-height:13.5px;color:#161616;font-weight:400;font-family:'Liberation Sans', sans-serif;">Diamante - Ascensore - Termine disdetta contratto Verifica - Rapid Elevator S.p.A.</div>
<svg style="position:absolute;left:10px;top:438.5px" width="12" height="12" viewBox="0 0 12 12"><defs><linearGradient id="cbg" x1="0" y1="0" x2="1" y2="1"><stop offset="0" stop-color="#c9d3dc"/><stop offset="0.6" stop-color="#f4f6f8"/><stop offset="1" stop-color="#ffffff"/></linearGradient></defs><rect x="0.75" y="0.75" width="10.5" height="10.5" rx="1.5" fill="url(#cbg)" stroke="#4e5661" stroke-width="1.5"/></svg>
<div class="t" style="left:27.30px;top:438.58px;font-size:13.85px;line-height:13.85px;color:#161616;font-weight:400;font-family:'Liberation Sans', sans-serif;">31/12/2025</div>
<svg style="position:absolute;left:111px;top:433.5px" width="21" height="21" viewBox="0 0 21 21"><g transform="rotate(-45 10.5 10.5)"><rect x="3.5" y="8.6" width="14" height="3.8" fill="#d6d6d6" stroke="#7c7c7c" stroke-width="0.9"/><circle cx="2.6" cy="10.5" r="3.5" fill="#d9d9d9" stroke="#7c7c7c" stroke-width="0.9"/><circle cx="18.4" cy="10.5" r="3.5" fill="#d9d9d9" stroke="#7c7c7c" stroke-width="0.9"/><rect x="-1.5" y="9.2" width="3.5" height="2.6" fill="#ffffff"/><rect x="19" y="9.2" width="3.5" height="2.6" fill="#ffffff"/></g></svg>
<div class="t" style="left:141.50px;top:438.87px;font-size:13.5px;line-height:13.5px;color:#161616;font-weight:400;font-family:'Liberation Sans', sans-serif;">Smeraldo - Pompe interrato - Scad. contratto Revisione - Termoidraulica Tonon di Tonon Lorenzo</div>
<svg style="position:absolute;left:10px;top:465.5px" width="12" height="12" viewBox="0 0 12 12"><defs><linearGradient id="cbg" x1="0" y1="0" x2="1" y2="1"><stop offset="0" stop-color="#c9d3dc"/><stop offset="0.6" stop-color="#f4f6f8"/><stop offset="1" stop-color="#ffffff"/></linearGradient></defs><rect x="0.75" y="0.75" width="10.5" height="10.5" rx="1.5" fill="url(#cbg)" stroke="#4e5661" stroke-width="1.5"/></svg>
<div class="t" style="left:27.30px;top:465.58px;font-size:13.85px;line-height:13.85px;color:#161616;font-weight:400;font-family:'Liberation Sans', sans-serif;">31/12/2024</div>
<svg style="position:absolute;left:114px;top:461.5px" width="18" height="20" viewBox="0 0 18 20"><path d="M0.5 0.5 H10.5 L14.5 4.5 V19.5 H0.5 Z" fill="#fafafa" stroke="#8a8a8a" stroke-width="1"/><path d="M10.5 0.5 V4.5 H14.5" fill="#e0e0e0" stroke="#9a9a9a" stroke-width="0.8"/><g stroke="#c4c4c4" stroke-width="1"><line x1="2.5" y1="7.5" x2="9" y2="7.5"/><line x1="2.5" y1="10.5" x2="8" y2="10.5"/><line x1="2.5" y1="13.5" x2="8" y2="13.5"/><line x1="2.5" y1="16.5" x2="8" y2="16.5"/></g><path d="M9.5 15 L8.5 19.5 L11 18.5 L12.5 20 L13 15.5 Z M13 15.5 L14 20 L15.5 18.5 L17.5 19.5 L16 15 Z" fill="#6d8db0"/><circle cx="12.8" cy="12.6" r="3.9" fill="#b0341f" stroke="#7e1d10" stroke-width="0.8"/><circle cx="12.8" cy="12.6" r="1.6" fill="#e9826b"/></svg>
<div class="t" style="left:141.50px;top:465.87px;font-size:13.5px;line-height:13.5px;color:#161616;font-weight:400;font-family:'Liberation Sans', sans-serif;">Diamante - Scadenza polizza assicurazione polizza nr. 1654471 (Lloyd Adriatico S.p.A.)</div>
<svg style="position:absolute;left:9px;top:494.5px" width="12" height="12" viewBox="0 0 12 12"><defs><linearGradient id="cbg" x1="0" y1="0" x2="1" y2="1"><stop offset="0" stop-color="#c9d3dc"/><stop offset="0.6" stop-color="#f4f6f8"/><stop offset="1" stop-color="#ffffff"/></linearGradient></defs><rect x="0.75" y="0.75" width="10.5" height="10.5" rx="1.5" fill="url(#cbg)" stroke="#4e5661" stroke-width="1.5"/></svg>
<svg style="position:absolute;left:7px;top:488.5px" width="18" height="18" viewBox="0 0 18 18"><path d="M1.5 9.5 L5.5 13.5 L15.5 2.5" fill="none" stroke="#2f7d1e" stroke-width="4.2" stroke-linecap="round" stroke-linejoin="round"/><path d="M1.5 9.5 L5.5 13.5 L15.5 2.5" fill="none" stroke="#5cc440" stroke-width="2.4" stroke-linecap="round" stroke-linejoin="round"/></svg>
<div class="t" style="left:27.30px;top:491.58px;font-size:13.85px;line-height:13.85px;color:#161616;font-weight:400;font-family:'Liberation Sans', sans-serif;">31/12/2024</div>
<svg style="position:absolute;left:114px;top:487.5px" width="18" height="20" viewBox="0 0 18 20"><path d="M0.5 0.5 H10.5 L14.5 4.5 V19.5 H0.5 Z" fill="#fafafa" stroke="#8a8a8a" stroke-width="1"/><path d="M10.5 0.5 V4.5 H14.5" fill="#e0e0e0" stroke="#9a9a9a" stroke-width="0.8"/><g stroke="#c4c4c4" stroke-width="1"><line x1="2.5" y1="7.5" x2="9" y2="7.5"/><line x1="2.5" y1="10.5" x2="8" y2="10.5"/><line x1="2.5" y1="13.5" x2="8" y2="13.5"/><line x1="2.5" y1="16.5" x2="8" y2="16.5"/></g><path d="M9.5 15 L8.5 19.5 L11 18.5 L12.5 20 L13 15.5 Z M13 15.5 L14 20 L15.5 18.5 L17.5 19.5 L16 15 Z" fill="#6d8db0"/><circle cx="12.8" cy="12.6" r="3.9" fill="#b0341f" stroke="#7e1d10" stroke-width="0.8"/><circle cx="12.8" cy="12.6" r="1.6" fill="#e9826b"/></svg>
<div class="t" style="left:141.50px;top:491.87px;font-size:13.5px;line-height:13.5px;color:#161616;font-weight:400;font-family:'Liberation Sans', sans-serif;">Zaffiro - Scadenza polizza assicurazione polizza nr. 026541 (Allianz S.p.A.)</div>
<svg style="position:absolute;left:10px;top:517.5px" width="12" height="12" viewBox="0 0 12 12"><defs><linearGradient id="cbg" x1="0" y1="0" x2="1" y2="1"><stop offset="0" stop-color="#c9d3dc"/><stop offset="0.6" stop-color="#f4f6f8"/><stop offset="1" stop-color="#ffffff"/></linearGradient></defs><rect x="0.75" y="0.75" width="10.5" height="10.5" rx="1.5" fill="url(#cbg)" stroke="#4e5661" stroke-width="1.5"/></svg>
<div class="t" style="left:27.30px;top:517.58px;font-size:13.85px;line-height:13.85px;color:#161616;font-weight:400;font-family:'Liberation Sans', sans-serif;">31/12/2024</div>
<svg style="position:absolute;left:111px;top:512.5px" width="21" height="21" viewBox="0 0 21 21"><g transform="rotate(-45 10.5 10.5)"><rect x="3.5" y="8.6" width="14" height="3.8" fill="#d6d6d6" stroke="#7c7c7c" stroke-width="0.9"/><circle cx="2.6" cy="10.5" r="3.5" fill="#d9d9d9" stroke="#7c7c7c" stroke-width="0.9"/><circle cx="18.4" cy="10.5" r="3.5" fill="#d9d9d9" stroke="#7c7c7c" stroke-width="0.9"/><rect x="-1.5" y="9.2" width="3.5" height="2.6" fill="#ffffff"/><rect x="19" y="9.2" width="3.5" height="2.6" fill="#ffffff"/></g></svg>
<div class="t" style="left:141.50px;top:517.87px;font-size:13.5px;line-height:13.5px;color:#161616;font-weight:400;font-family:'Liberation Sans', sans-serif;">Diamante - Ascensore - Scad. contratto Manutenzione - Secure Elevator S.p.A.</div>
<svg style="position:absolute;left:10px;top:543.5px" width="12" height="12" viewBox="0 0 12 12"><defs><linearGradient id="cbg" x1="0" y1="0" x2="1" y2="1"><stop offset="0" stop-color="#c9d3dc"/><stop offset="0.6" stop-color="#f4f6f8"/><stop offset="1" stop-color="#ffffff"/></linearGradient></defs><rect x="0.75" y="0.75" width="10.5" height="10.5" rx="1.5" fill="url(#cbg)" stroke="#4e5661" stroke-width="1.5"/></svg>
<div class="t" style="left:27.30px;top:543.58px;font-size:13.85px;line-height:13.85px;color:#161616;font-weight:400;font-family:'Liberation Sans', sans-serif;">16/12/2024</div>
<svg style="position:absolute;left:113.5px;top:539.5px" width="19" height="20" viewBox="0 0 19 20"><path d="M0.5 2.5 V16.5 Q7.5 19.5 14.5 16.5 V2.5" fill="#5a96d6" stroke="#5a636d" stroke-width="1"/><rect x="1.5" y="3" width="6.5" height="13.5" fill="#79b2e6"/><rect x="9" y="3" width="5" height="10" fill="#3f5f86"/><ellipse cx="7.5" cy="2.5" rx="7" ry="2" fill="#d5d9de" stroke="#6a737c" stroke-width="1"/><g fill="#e5eef7" opacity="0.8"><rect x="2" y="5.5" width="5" height="1.2"/></g><circle cx="12" cy="14" r="5" fill="#f4f6f9" stroke="#6e7884" stroke-width="1.2"/><path d="M13.5 11.5 L11.5 14.5 L11 16.5" stroke="#7a848e" stroke-width="1" fill="none"/></svg>
<div class="t" style="left:141.50px;top:543.87px;font-size:13.5px;line-height:13.5px;color:#161616;font-weight:400;font-family:'Liberation Sans', sans-serif;">Versamento ritenute d&#x27;acconto</div>
<svg style="position:absolute;left:10px;top:570.5px" width="12" height="12" viewBox="0 0 12 12"><defs><linearGradient id="cbg" x1="0" y1="0" x2="1" y2="1"><stop offset="0" stop-color="#c9d3dc"/><stop offset="0.6" stop-color="#f4f6f8"/><stop offset="1" stop-color="#ffffff"/></linearGradient></defs><rect x="0.75" y="0.75" width="10.5" height="10.5" rx="1.5" fill="url(#cbg)" stroke="#4e5661" stroke-width="1.5"/></svg>
<div class="t" style="left:27.30px;top:570.58px;font-size:13.85px;line-height:13.85px;color:#161616;font-weight:400;font-family:'Liberation Sans', sans-serif;">18/11/2024</div>
<svg style="position:absolute;left:113.5px;top:566.5px" width="19" height="20" viewBox="0 0 19 20"><path d="M0.5 2.5 V16.5 Q7.5 19.5 14.5 16.5 V2.5" fill="#5a96d6" stroke="#5a636d" stroke-width="1"/><rect x="1.5" y="3" width="6.5" height="13.5" fill="#79b2e6"/><rect x="9" y="3" width="5" height="10" fill="#3f5f86"/><ellipse cx="7.5" cy="2.5" rx="7" ry="2" fill="#d5d9de" stroke="#6a737c" stroke-width="1"/><g fill="#e5eef7" opacity="0.8"><rect x="2" y="5.5" width="5" height="1.2"/></g><circle cx="12" cy="14" r="5" fill="#f4f6f9" stroke="#6e7884" stroke-width="1.2"/><path d="M13.5 11.5 L11.5 14.5 L11 16.5" stroke="#7a848e" stroke-width="1" fill="none"/></svg>
<div class="t" style="left:141.50px;top:570.87px;font-size:13.5px;line-height:13.5px;color:#161616;font-weight:400;font-family:'Liberation Sans', sans-serif;">Versamento ritenute d&#x27;acconto</div>
<svg style="position:absolute;left:10px;top:596.5px" width="12" height="12" viewBox="0 0 12 12"><defs><linearGradient id="cbg" x1="0" y1="0" x2="1" y2="1"><stop offset="0" stop-color="#c9d3dc"/><stop offset="0.6" stop-color="#f4f6f8"/><stop offset="1" stop-color="#ffffff"/></linearGradient></defs><rect x="0.75" y="0.75" width="10.5" height="10.5" rx="1.5" fill="url(#cbg)" stroke="#4e5661" stroke-width="1.5"/></svg>
<div class="t" style="left:27.30px;top:596.58px;font-size:13.85px;line-height:13.85px;color:#161616;font-weight:400;font-family:'Liberation Sans', sans-serif;">30/10/2024</div>
<svg style="position:absolute;left:111px;top:591.5px" width="21" height="21" viewBox="0 0 21 21"><g transform="rotate(-45 10.5 10.5)"><rect x="3.5" y="8.6" width="14" height="3.8" fill="#d6d6d6" stroke="#7c7c7c" stroke-width="0.9"/><circle cx="2.6" cy="10.5" r="3.5" fill="#d9d9d9" stroke="#7c7c7c" stroke-width="0.9"/><circle cx="18.4" cy="10.5" r="3.5" fill="#d9d9d9" stroke="#7c7c7c" stroke-width="0.9"/><rect x="-1.5" y="9.2" width="3.5" height="2.6" fill="#ffffff"/><rect x="19" y="9.2" width="3.5" height="2.6" fill="#ffffff"/></g></svg>
<div class="t" style="left:141.50px;top:596.87px;font-size:13.5px;line-height:13.5px;color:#161616;font-weight:400;font-family:'Liberation Sans', sans-serif;">Diamante - Ascensore - Termine disdetta contratto Manutenzione - Secure Elevator S.p.A.</div>
<svg style="position:absolute;left:10px;top:622.5px" width="12" height="12" viewBox="0 0 12 12"><defs><linearGradient id="cbg" x1="0" y1="0" x2="1" y2="1"><stop offset="0" stop-color="#c9d3dc"/><stop offset="0.6" stop-color="#f4f6f8"/><stop offset="1" stop-color="#ffffff"/></linearGradient></defs><rect x="0.75" y="0.75" width="10.5" height="10.5" rx="1.5" fill="url(#cbg)" stroke="#4e5661" stroke-width="1.5"/></svg>
<div class="t" style="left:27.30px;top:622.58px;font-size:13.85px;line-height:13.85px;color:#161616;font-weight:400;font-family:'Liberation Sans', sans-serif;">16/10/2024</div>
<svg style="position:absolute;left:113.5px;top:618.5px" width="19" height="20" viewBox="0 0 19 20"><path d="M0.5 2.5 V16.5 Q7.5 19.5 14.5 16.5 V2.5" fill="#5a96d6" stroke="#5a636d" stroke-width="1"/><rect x="1.5" y="3" width="6.5" height="13.5" fill="#79b2e6"/><rect x="9" y="3" width="5" height="10" fill="#3f5f86"/><ellipse cx="7.5" cy="2.5" rx="7" ry="2" fill="#d5d9de" stroke="#6a737c" stroke-width="1"/><g fill="#e5eef7" opacity="0.8"><rect x="2" y="5.5" width="5" height="1.2"/></g><circle cx="12" cy="14" r="5" fill="#f4f6f9" stroke="#6e7884" stroke-width="1.2"/><path d="M13.5 11.5 L11.5 14.5 L11 16.5" stroke="#7a848e" stroke-width="1" fill="none"/></svg>
<div class="t" style="left:141.50px;top:622.87px;font-size:13.5px;line-height:13.5px;color:#161616;font-weight:400;font-family:'Liberation Sans', sans-serif;">Versamento ritenute d&#x27;acconto</div>
<svg style="position:absolute;left:10px;top:648.5px" width="12" height="12" viewBox="0 0 12 12"><defs><linearGradient id="cbg" x1="0" y1="0" x2="1" y2="1"><stop offset="0" stop-color="#c9d3dc"/><stop offset="0.6" stop-color="#f4f6f8"/><stop offset="1" stop-color="#ffffff"/></linearGradient></defs><rect x="0.75" y="0.75" width="10.5" height="10.5" rx="1.5" fill="url(#cbg)" stroke="#4e5661" stroke-width="1.5"/></svg>
<div class="t" style="left:27.30px;top:648.58px;font-size:13.85px;line-height:13.85px;color:#161616;font-weight:400;font-family:'Liberation Sans', sans-serif;">16/09/2024</div>
<svg style="position:absolute;left:113.5px;top:644.5px" width="19" height="20" viewBox="0 0 19 20"><path d="M0.5 2.5 V16.5 Q7.5 19.5 14.5 16.5 V2.5" fill="#5a96d6" stroke="#5a636d" stroke-width="1"/><rect x="1.5" y="3" width="6.5" height="13.5" fill="#79b2e6"/><rect x="9" y="3" width="5" height="10" fill="#3f5f86"/><ellipse cx="7.5" cy="2.5" rx="7" ry="2" fill="#d5d9de" stroke="#6a737c" stroke-width="1"/><g fill="#e5eef7" opacity="0.8"><rect x="2" y="5.5" width="5" height="1.2"/></g><circle cx="12" cy="14" r="5" fill="#f4f6f9" stroke="#6e7884" stroke-width="1.2"/><path d="M13.5 11.5 L11.5 14.5 L11 16.5" stroke="#7a848e" stroke-width="1" fill="none"/></svg>
<div class="t" style="left:141.50px;top:648.87px;font-size:13.5px;line-height:13.5px;color:#161616;font-weight:400;font-family:'Liberation Sans', sans-serif;">Versamento ritenute d&#x27;acconto</div>
<svg style="position:absolute;left:10px;top:675.5px" width="12" height="12" viewBox="0 0 12 12"><defs><linearGradient id="cbg" x1="0" y1="0" x2="1" y2="1"><stop offset="0" stop-color="#c9d3dc"/><stop offset="0.6" stop-color="#f4f6f8"/><stop offset="1" stop-color="#ffffff"/></linearGradient></defs><rect x="0.75" y="0.75" width="10.5" height="10.5" rx="1.5" fill="url(#cbg)" stroke="#4e5661" stroke-width="1.5"/></svg>
<div class="t" style="left:27.30px;top:675.58px;font-size:13.85px;line-height:13.85px;color:#ff1f1f;font-weight:400;font-family:'Liberation Sans', sans-serif;">20/08/2024</div>
<svg style="position:absolute;left:113.5px;top:671.5px" width="19" height="20" viewBox="0 0 19 20"><path d="M0.5 2.5 V16.5 Q7.5 19.5 14.5 16.5 V2.5" fill="#5a96d6" stroke="#5a636d" stroke-width="1"/><rect x="1.5" y="3" width="6.5" height="13.5" fill="#79b2e6"/><rect x="9" y="3" width="5" height="10" fill="#3f5f86"/><ellipse cx="7.5" cy="2.5" rx="7" ry="2" fill="#d5d9de" stroke="#6a737c" stroke-width="1"/><g fill="#e5eef7" opacity="0.8"><rect x="2" y="5.5" width="5" height="1.2"/></g><circle cx="12" cy="14" r="5" fill="#f4f6f9" stroke="#6e7884" stroke-width="1.2"/><path d="M13.5 11.5 L11.5 14.5 L11 16.5" stroke="#7a848e" stroke-width="1" fill="none"/></svg>
<div class="t" style="left:141.50px;top:675.87px;font-size:13.5px;line-height:13.5px;color:#161616;font-weight:400;font-family:'Liberation Sans', sans-serif;">Versamento ritenute d&#x27;acconto</div>
<svg style="position:absolute;left:10px;top:701.5px" width="12" height="12" viewBox="0 0 12 12"><defs><linearGradient id="cbg" x1="0" y1="0" x2="1" y2="1"><stop offset="0" stop-color="#c9d3dc"/><stop offset="0.6" stop-color="#f4f6f8"/><stop offset="1" stop-color="#ffffff"/></linearGradient></defs><rect x="0.75" y="0.75" width="10.5" height="10.5" rx="1.5" fill="url(#cbg)" stroke="#4e5661" stroke-width="1.5"/></svg>
<div class="t" style="left:27.30px;top:701.58px;font-size:13.85px;line-height:13.85px;color:#ff1f1f;font-weight:400;font-family:'Liberation Sans', sans-serif;">16/07/2024</div>
<svg style="position:absolute;left:113.5px;top:697.5px" width="19" height="20" viewBox="0 0 19 20"><path d="M0.5 2.5 V16.5 Q7.5 19.5 14.5 16.5 V2.5" fill="#5a96d6" stroke="#5a636d" stroke-width="1"/><rect x="1.5" y="3" width="6.5" height="13.5" fill="#79b2e6"/><rect x="9" y="3" width="5" height="10" fill="#3f5f86"/><ellipse cx="7.5" cy="2.5" rx="7" ry="2" fill="#d5d9de" stroke="#6a737c" stroke-width="1"/><g fill="#e5eef7" opacity="0.8"><rect x="2" y="5.5" width="5" height="1.2"/></g><circle cx="12" cy="14" r="5" fill="#f4f6f9" stroke="#6e7884" stroke-width="1.2"/><path d="M13.5 11.5 L11.5 14.5 L11 16.5" stroke="#7a848e" stroke-width="1" fill="none"/></svg>
<div class="t" style="left:141.50px;top:701.87px;font-size:13.5px;line-height:13.5px;color:#161616;font-weight:400;font-family:'Liberation Sans', sans-serif;">Versamento ritenute d&#x27;acconto</div>
<svg style="position:absolute;left:10px;top:727.5px" width="12" height="12" viewBox="0 0 12 12"><defs><linearGradient id="cbg" x1="0" y1="0" x2="1" y2="1"><stop offset="0" stop-color="#c9d3dc"/><stop offset="0.6" stop-color="#f4f6f8"/><stop offset="1" stop-color="#ffffff"/></linearGradient></defs><rect x="0.75" y="0.75" width="10.5" height="10.5" rx="1.5" fill="url(#cbg)" stroke="#4e5661" stroke-width="1.5"/></svg>
<div class="t" style="left:27.30px;top:727.58px;font-size:13.85px;line-height:13.85px;color:#ff1f1f;font-weight:400;font-family:'Liberation Sans', sans-serif;">31/12/2023</div>
<svg style="position:absolute;left:114px;top:723.5px" width="18" height="20" viewBox="0 0 18 20"><path d="M0.5 0.5 H10.5 L14.5 4.5 V19.5 H0.5 Z" fill="#fafafa" stroke="#8a8a8a" stroke-width="1"/><path d="M10.5 0.5 V4.5 H14.5" fill="#e0e0e0" stroke="#9a9a9a" stroke-width="0.8"/><g stroke="#c4c4c4" stroke-width="1"><line x1="2.5" y1="7.5" x2="9" y2="7.5"/><line x1="2.5" y1="10.5" x2="8" y2="10.5"/><line x1="2.5" y1="13.5" x2="8" y2="13.5"/><line x1="2.5" y1="16.5" x2="8" y2="16.5"/></g><path d="M9.5 15 L8.5 19.5 L11 18.5 L12.5 20 L13 15.5 Z M13 15.5 L14 20 L15.5 18.5 L17.5 19.5 L16 15 Z" fill="#6d8db0"/><circle cx="12.8" cy="12.6" r="3.9" fill="#b0341f" stroke="#7e1d10" stroke-width="0.8"/><circle cx="12.8" cy="12.6" r="1.6" fill="#e9826b"/></svg>
<div class="t" style="left:141.50px;top:727.87px;font-size:13.5px;line-height:13.5px;color:#161616;font-weight:400;font-family:'Liberation Sans', sans-serif;">Rubino - Scadenza polizza assicurazione polizza nr. 14584/a (Reale Mutua)</div>
<svg style="position:absolute;left:10px;top:753.5px" width="12" height="12" viewBox="0 0 12 12"><defs><linearGradient id="cbg" x1="0" y1="0" x2="1" y2="1"><stop offset="0" stop-color="#c9d3dc"/><stop offset="0.6" stop-color="#f4f6f8"/><stop offset="1" stop-color="#ffffff"/></linearGradient></defs><rect x="0.75" y="0.75" width="10.5" height="10.5" rx="1.5" fill="url(#cbg)" stroke="#4e5661" stroke-width="1.5"/></svg>
<div class="t" style="left:27.30px;top:753.58px;font-size:13.85px;line-height:13.85px;color:#ff1f1f;font-weight:400;font-family:'Liberation Sans', sans-serif;">31/12/2023</div>
<svg style="position:absolute;left:111px;top:748.5px" width="21" height="21" viewBox="0 0 21 21"><g transform="rotate(-45 10.5 10.5)"><rect x="3.5" y="8.6" width="14" height="3.8" fill="#d6d6d6" stroke="#7c7c7c" stroke-width="0.9"/><circle cx="2.6" cy="10.5" r="3.5" fill="#d9d9d9" stroke="#7c7c7c" stroke-width="0.9"/><circle cx="18.4" cy="10.5" r="3.5" fill="#d9d9d9" stroke="#7c7c7c" stroke-width="0.9"/><rect x="-1.5" y="9.2" width="3.5" height="2.6" fill="#ffffff"/><rect x="19" y="9.2" width="3.5" height="2.6" fill="#ffffff"/></g></svg>
<div class="t" style="left:141.50px;top:753.87px;font-size:13.5px;line-height:13.5px;color:#161616;font-weight:400;font-family:'Liberation Sans', sans-serif;">Rubino - Impianto di riscaldamento - Scad. contratto Verifica - Ragusa Pietro</div>
<svg style="position:absolute;left:10px;top:780.5px" width="12" height="12" viewBox="0 0 12 12"><defs><linearGradient id="cbg" x1="0" y1="0" x2="1" y2="1"><stop offset="0" stop-color="#c9d3dc"/><stop offset="0.6" stop-color="#f4f6f8"/><stop offset="1" stop-color="#ffffff"/></linearGradient></defs><rect x="0.75" y="0.75" width="10.5" height="10.5" rx="1.5" fill="url(#cbg)" stroke="#4e5661" stroke-width="1.5"/></svg>
<div class="t" style="left:27.30px;top:780.58px;font-size:13.85px;line-height:13.85px;color:#ff1f1f;font-weight:400;font-family:'Liberation Sans', sans-serif;">31/12/2023</div>
<svg style="position:absolute;left:110.5px;top:775px" width="22" height="22" viewBox="0 0 22 22"><rect x="0.8" y="4.5" width="13" height="16.5" rx="1.5" fill="#dfe6ee" stroke="#66707c" stroke-width="1.2"/><rect x="2.5" y="6.5" width="9.5" height="7" fill="#ffffff"/><rect x="2.5" y="7" width="2" height="6" fill="#e04a3a"/><rect x="6" y="8" width="2" height="5" fill="#e04a3a"/><rect x="2.5" y="14" width="9.5" height="5" fill="#a9d4f2"/><circle cx="14.5" cy="7" r="6" fill="#f6f6f6" stroke="#5c6672" stroke-width="1.3"/><path d="M14.5 3.5 V7 L17.5 8" stroke="#444" stroke-width="0.9" fill="none"/></svg>
<div class="t" style="left:141.50px;top:780.87px;font-size:13.5px;line-height:13.5px;color:#161616;font-weight:400;font-family:'Liberation Sans', sans-serif;">Diamante - Chiusura esercizio 2023</div>
<svg style="position:absolute;left:10px;top:806.5px" width="12" height="12" viewBox="0 0 12 12"><defs><linearGradient id="cbg" x1="0" y1="0" x2="1" y2="1"><stop offset="0" stop-color="#c9d3dc"/><stop offset="0.6" stop-color="#f4f6f8"/><stop offset="1" stop-color="#ffffff"/></linearGradient></defs><rect x="0.75" y="0.75" width="10.5" height="10.5" rx="1.5" fill="url(#cbg)" stroke="#4e5661" stroke-width="1.5"/></svg>
<div class="t" style="left:27.30px;top:806.58px;font-size:13.85px;line-height:13.85px;color:#ff1f1f;font-weight:400;font-family:'Liberation Sans', sans-serif;">31/12/2023</div>
<svg style="position:absolute;left:110.5px;top:801px" width="22" height="22" viewBox="0 0 22 22"><rect x="0.8" y="4.5" width="13" height="16.5" rx="1.5" fill="#dfe6ee" stroke="#66707c" stroke-width="1.2"/><rect x="2.5" y="6.5" width="9.5" height="7" fill="#ffffff"/><rect x="2.5" y="7" width="2" height="6" fill="#e04a3a"/><rect x="6" y="8" width="2" height="5" fill="#e04a3a"/><rect x="2.5" y="14" width="9.5" height="5" fill="#a9d4f2"/><circle cx="14.5" cy="7" r="6" fill="#f6f6f6" stroke="#5c6672" stroke-width="1.3"/><path d="M14.5 3.5 V7 L17.5 8" stroke="#444" stroke-width="0.9" fill="none"/></svg>
<div class="t" style="left:141.50px;top:806.87px;font-size:13.5px;line-height:13.5px;color:#161616;font-weight:400;font-family:'Liberation Sans', sans-serif;">Rubino - Chiusura esercizio 2022</div>
<svg style="position:absolute;left:10px;top:832.5px" width="12" height="12" viewBox="0 0 12 12"><defs><linearGradient id="cbg" x1="0" y1="0" x2="1" y2="1"><stop offset="0" stop-color="#c9d3dc"/><stop offset="0.6" stop-color="#f4f6f8"/><stop offset="1" stop-color="#ffffff"/></linearGradient></defs><rect x="0.75" y="0.75" width="10.5" height="10.5" rx="1.5" fill="url(#cbg)" stroke="#4e5661" stroke-width="1.5"/></svg>
<div class="t" style="left:27.30px;top:832.58px;font-size:13.85px;line-height:13.85px;color:#ff1f1f;font-weight:400;font-family:'Liberation Sans', sans-serif;">31/12/2023</div>
<svg style="position:absolute;left:110.5px;top:827px" width="22" height="22" viewBox="0 0 22 22"><rect x="0.8" y="4.5" width="13" height="16.5" rx="1.5" fill="#dfe6ee" stroke="#66707c" stroke-width="1.2"/><rect x="2.5" y="6.5" width="9.5" height="7" fill="#ffffff"/><rect x="2.5" y="7" width="2" height="6" fill="#e04a3a"/><rect x="6" y="8" width="2" height="5" fill="#e04a3a"/><rect x="2.5" y="14" width="9.5" height="5" fill="#a9d4f2"/><circle cx="14.5" cy="7" r="6" fill="#f6f6f6" stroke="#5c6672" stroke-width="1.3"/><path d="M14.5 3.5 V7 L17.5 8" stroke="#444" stroke-width="0.9" fill="none"/></svg>
<div class="t" style="left:141.50px;top:832.87px;font-size:13.5px;line-height:13.5px;color:#161616;font-weight:400;font-family:'Liberation Sans', sans-serif;">Smeraldo - Chiusura esercizio 2023</div>
<svg style="position:absolute;left:10px;top:858.5px" width="12" height="12" viewBox="0 0 12 12"><defs><linearGradient id="cbg" x1="0" y1="0" x2="1" y2="1"><stop offset="0" stop-color="#c9d3dc"/><stop offset="0.6" stop-color="#f4f6f8"/><stop offset="1" stop-color="#ffffff"/></linearGradient></defs><rect x="0.75" y="0.75" width="10.5" height="10.5" rx="1.5" fill="url(#cbg)" stroke="#4e5661" stroke-width="1.5"/></svg>
<div class="t" style="left:27.30px;top:858.58px;font-size:13.85px;line-height:13.85px;color:#ff1f1f;font-weight:400;font-family:'Liberation Sans', sans-serif;">31/08/2023</div>
<svg style="position:absolute;left:111px;top:853.5px" width="21" height="21" viewBox="0 0 21 21"><g transform="rotate(-45 10.5 10.5)"><rect x="3.5" y="8.6" width="14" height="3.8" fill="#d6d6d6" stroke="#7c7c7c" stroke-width="0.9"/><circle cx="2.6" cy="10.5" r="3.5" fill="#d9d9d9" stroke="#7c7c7c" stroke-width="0.9"/><circle cx="18.4" cy="10.5" r="3.5" fill="#d9d9d9" stroke="#7c7c7c" stroke-width="0.9"/><rect x="-1.5" y="9.2" width="3.5" height="2.6" fill="#ffffff"/><rect x="19" y="9.2" width="3.5" height="2.6" fill="#ffffff"/></g></svg>
<div class="t" style="left:141.50px;top:858.87px;font-size:13.5px;line-height:13.5px;color:#161616;font-weight:400;font-family:'Liberation Sans', sans-serif;">Rubino - Impianto di riscaldamento - Termine disdetta contratto Verifica - Ragusa Pietro</div>
<svg style="position:absolute;left:9px;top:888.5px" width="12" height="12" viewBox="0 0 12 12"><defs><linearGradient id="cbg" x1="0" y1="0" x2="1" y2="1"><stop offset="0" stop-color="#c9d3dc"/><stop offset="0.6" stop-color="#f4f6f8"/><stop offset="1" stop-color="#ffffff"/></linearGradient></defs><rect x="0.75" y="0.75" width="10.5" height="10.5" rx="1.5" fill="url(#cbg)" stroke="#4e5661" stroke-width="1.5"/></svg>
<svg style="position:absolute;left:7px;top:882.5px" width="18" height="18" viewBox="0 0 18 18"><path d="M1.5 9.5 L5.5 13.5 L15.5 2.5" fill="none" stroke="#2f7d1e" stroke-width="4.2" stroke-linecap="round" stroke-linejoin="round"/><path d="M1.5 9.5 L5.5 13.5 L15.5 2.5" fill="none" stroke="#5cc440" stroke-width="2.4" stroke-linecap="round" stroke-linejoin="round"/></svg>
<div class="t" style="left:27.30px;top:885.58px;font-size:13.85px;line-height:13.85px;color:#ff1f1f;font-weight:400;font-family:'Liberation Sans', sans-serif;">11/07/2023</div>
<svg style="position:absolute;left:111px;top:880.5px" width="21" height="21" viewBox="0 0 21 21"><g transform="rotate(-45 10.5 10.5)"><rect x="3.5" y="8.6" width="14" height="3.8" fill="#d6d6d6" stroke="#7c7c7c" stroke-width="0.9"/><circle cx="2.6" cy="10.5" r="3.5" fill="#d9d9d9" stroke="#7c7c7c" stroke-width="0.9"/><circle cx="18.4" cy="10.5" r="3.5" fill="#d9d9d9" stroke="#7c7c7c" stroke-width="0.9"/><rect x="-1.5" y="9.2" width="3.5" height="2.6" fill="#ffffff"/><rect x="19" y="9.2" width="3.5" height="2.6" fill="#ffffff"/></g></svg>
<div class="t" style="left:141.50px;top:885.87px;font-size:13.5px;line-height:13.5px;color:#161616;font-weight:400;font-family:'Liberation Sans', sans-serif;">Diamante - Ascensore - Verifica - Rapid Elevator S.p.A.</div>
<svg style="position:absolute;left:10px;top:911.5px" width="12" height="12" viewBox="0 0 12 12"><defs><linearGradient id="cbg" x1="0" y1="0" x2="1" y2="1"><stop offset="0" stop-color="#c9d3dc"/><stop offset="0.6" stop-color="#f4f6f8"/><stop offset="1" stop-color="#ffffff"/></linearGradient></defs><rect x="0.75" y="0.75" width="10.5" height="10.5" rx="1.5" fill="url(#cbg)" stroke="#4e5661" stroke-width="1.5"/></svg>
<div class="t" style="left:27.30px;top:911.58px;font-size:13.85px;line-height:13.85px;color:#ff1f1f;font-weight:400;font-family:'Liberation Sans', sans-serif;">15/02/2023</div>
<svg style="position:absolute;left:111px;top:906.5px" width="21" height="21" viewBox="0 0 21 21"><g transform="rotate(-45 10.5 10.5)"><rect x="3.5" y="8.6" width="14" height="3.8" fill="#d6d6d6" stroke="#7c7c7c" stroke-width="0.9"/><circle cx="2.6" cy="10.5" r="3.5" fill="#d9d9d9" stroke="#7c7c7c" stroke-width="0.9"/><circle cx="18.4" cy="10.5" r="3.5" fill="#d9d9d9" stroke="#7c7c7c" stroke-width="0.9"/><rect x="-1.5" y="9.2" width="3.5" height="2.6" fill="#ffffff"/><rect x="19" y="9.2" width="3.5" height="2.6" fill="#ffffff"/></g></svg>
<div class="t" style="left:141.50px;top:911.87px;font-size:13.5px;line-height:13.5px;color:#161616;font-weight:400;font-family:'Liberation Sans', sans-serif;">Smeraldo - Pompe interrato - Revisione - Termoidraulica Tonon di Tonon Lorenzo</div>
<svg style="position:absolute;left:10px;top:937.5px" width="12" height="12" viewBox="0 0 12 12"><defs><linearGradient id="cbg" x1="0" y1="0" x2="1" y2="1"><stop offset="0" stop-color="#c9d3dc"/><stop offset="0.6" stop-color="#f4f6f8"/><stop offset="1" stop-color="#ffffff"/></linearGradient></defs><rect x="0.75" y="0.75" width="10.5" height="10.5" rx="1.5" fill="url(#cbg)" stroke="#4e5661" stroke-width="1.5"/></svg>
<div class="t" style="left:27.30px;top:937.58px;font-size:13.85px;line-height:13.85px;color:#ff1f1f;font-weight:400;font-family:'Liberation Sans', sans-serif;">02/02/2023</div>
<svg style="position:absolute;left:111px;top:932.5px" width="21" height="21" viewBox="0 0 21 21"><g transform="rotate(-45 10.5 10.5)"><rect x="3.5" y="8.6" width="14" height="3.8" fill="#d6d6d6" stroke="#7c7c7c" stroke-width="0.9"/><circle cx="2.6" cy="10.5" r="3.5" fill="#d9d9d9" stroke="#7c7c7c" stroke-width="0.9"/><circle cx="18.4" cy="10.5" r="3.5" fill="#d9d9d9" stroke="#7c7c7c" stroke-width="0.9"/><rect x="-1.5" y="9.2" width="3.5" height="2.6" fill="#ffffff"/><rect x="19" y="9.2" width="3.5" height="2.6" fill="#ffffff"/></g></svg>
<div class="t" style="left:141.50px;top:937.87px;font-size:13.5px;line-height:13.5px;color:#161616;font-weight:400;font-family:'Liberation Sans', sans-serif;">Diamante - Ascensore - Manutenzione - Secure Elevator S.p.A.</div>
<svg style="position:absolute;left:10px;top:963.5px" width="12" height="12" viewBox="0 0 12 12"><defs><linearGradient id="cbg" x1="0" y1="0" x2="1" y2="1"><stop offset="0" stop-color="#c9d3dc"/><stop offset="0.6" stop-color="#f4f6f8"/><stop offset="1" stop-color="#ffffff"/></linearGradient></defs><rect x="0.75" y="0.75" width="10.5" height="10.5" rx="1.5" fill="url(#cbg)" stroke="#4e5661" stroke-width="1.5"/></svg>
<div class="t" style="left:27.30px;top:963.58px;font-size:13.85px;line-height:13.85px;color:#ff1f1f;font-weight:400;font-family:'Liberation Sans', sans-serif;">08/01/2023</div>
<svg style="position:absolute;left:111px;top:958.5px" width="21" height="21" viewBox="0 0 21 21"><g transform="rotate(-45 10.5 10.5)"><rect x="3.5" y="8.6" width="14" height="3.8" fill="#d6d6d6" stroke="#7c7c7c" stroke-width="0.9"/><circle cx="2.6" cy="10.5" r="3.5" fill="#d9d9d9" stroke="#7c7c7c" stroke-width="0.9"/><circle cx="18.4" cy="10.5" r="3.5" fill="#d9d9d9" stroke="#7c7c7c" stroke-width="0.9"/><rect x="-1.5" y="9.2" width="3.5" height="2.6" fill="#ffffff"/><rect x="19" y="9.2" width="3.5" height="2.6" fill="#ffffff"/></g></svg>
<div class="t" style="left:141.50px;top:963.87px;font-size:13.5px;line-height:13.5px;color:#161616;font-weight:400;font-family:'Liberation Sans', sans-serif;">Rubino - Impianto di riscaldamento - Verifica - Ragusa Pietro</div>
<svg style="position:absolute;left:10px;top:990.5px" width="12" height="12" viewBox="0 0 12 12"><defs><linearGradient id="cbg" x1="0" y1="0" x2="1" y2="1"><stop offset="0" stop-color="#c9d3dc"/><stop offset="0.6" stop-color="#f4f6f8"/><stop offset="1" stop-color="#ffffff"/></linearGradient></defs><rect x="0.75" y="0.75" width="10.5" height="10.5" rx="1.5" fill="url(#cbg)" stroke="#4e5661" stroke-width="1.5"/></svg>
<div class="t" style="left:27.30px;top:990.58px;font-size:13.85px;line-height:13.85px;color:#ff1f1f;font-weight:400;font-family:'Liberation Sans', sans-serif;">31/12/2022</div>
<svg style="position:absolute;left:114px;top:986.5px" width="18" height="20" viewBox="0 0 18 20"><path d="M0.5 0.5 H10.5 L14.5 4.5 V19.5 H0.5 Z" fill="#fafafa" stroke="#8a8a8a" stroke-width="1"/><path d="M10.5 0.5 V4.5 H14.5" fill="#e0e0e0" stroke="#9a9a9a" stroke-width="0.8"/><g stroke="#c4c4c4" stroke-width="1"><line x1="2.5" y1="7.5" x2="9" y2="7.5"/><line x1="2.5" y1="10.5" x2="8" y2="10.5"/><line x1="2.5" y1="13.5" x2="8" y2="13.5"/><line x1="2.5" y1="16.5" x2="8" y2="16.5"/></g><path d="M9.5 15 L8.5 19.5 L11 18.5 L12.5 20 L13 15.5 Z M13 15.5 L14 20 L15.5 18.5 L17.5 19.5 L16 15 Z" fill="#6d8db0"/><circle cx="12.8" cy="12.6" r="3.9" fill="#b0341f" stroke="#7e1d10" stroke-width="0.8"/><circle cx="12.8" cy="12.6" r="1.6" fill="#e9826b"/></svg>
<div class="t" style="left:141.50px;top:990.87px;font-size:13.5px;line-height:13.5px;color:#161616;font-weight:400;font-family:'Liberation Sans', sans-serif;">Diamante - Scadenza premio assicurazione polizza nr. 1654471 (Lloyd Adriatico S.p.A.)</div>
<div style="position:absolute;left:1899px;top:354px;width:20px;height:643px;background:#f0f0f0"></div>
<svg style="position:absolute;left:1904px;top:361px" width="11" height="7" viewBox="0 0 11 7"><polyline points="1,6 5.5,1.5 10,6" fill="none" stroke="#606060" stroke-width="2"/></svg>
<div style="position:absolute;left:1900px;top:375px;width:18px;height:21px;background:#cdcdcd"></div>
<svg style="position:absolute;left:1904px;top:984px" width="11" height="7" viewBox="0 0 11 7"><polyline points="1,1 5.5,5.5 10,1" fill="none" stroke="#606060" stroke-width="2"/></svg>
<div style="position:absolute;left:0px;top:997px;width:1919px;height:33px;background:#f0f0f0"></div>
<div class="t" style="left:36.25px;top:1007.97px;font-size:13.5px;line-height:13.5px;color:#1a1a24;font-weight:400;font-family:'Liberation Sans', sans-serif;">Nuovo memo</div>
<div class="t" style="left:160.60px;top:1007.97px;font-size:13.5px;line-height:13.5px;color:#8f8f8f;font-weight:400;font-family:'Liberation Sans', sans-serif;">Modifica</div>
<div class="t" style="left:253.80px;top:1007.97px;font-size:13.5px;line-height:13.5px;color:#8f8f8f;font-weight:400;font-family:'Liberation Sans', sans-serif;">Elimina</div>
<div class="t" style="left:342.40px;top:1007.97px;font-size:13.5px;line-height:13.5px;color:#8f8f8f;font-weight:400;font-family:'Liberation Sans', sans-serif;">Duplica</div>
<div class="t" style="left:428.80px;top:1007.97px;font-size:13.5px;line-height:13.5px;color:#1a1a24;font-weight:400;font-family:'Liberation Sans', sans-serif;">Cerca</div>
<div class="t" style="left:515.40px;top:1007.97px;font-size:13.5px;line-height:13.5px;color:#1a1a24;font-weight:400;font-family:'Liberation Sans', sans-serif;">Stampa</div>
<div class="t" style="left:609.70px;top:1007.97px;font-size:13.5px;line-height:13.5px;color:#1a1a24;font-weight:400;font-family:'Liberation Sans', sans-serif;">Excel</div>
<div class="t" style="left:688.50px;top:1007.97px;font-size:13.5px;line-height:13.5px;color:#1a1a24;font-weight:400;font-family:'Liberation Sans', sans-serif;">Esporta</div>
<div style="position:absolute;left:496px;top:200px;width:929px;height:627px;background:#f0f0f0;box-shadow:0 1px 10px 2px rgba(0,0,0,0.24)"></div>
<div style="position:absolute;left:496px;top:200px;width:929px;height:118px;background:#ffffff"></div>
<div style="position:absolute;left:496px;top:200px;width:929px;height:1px;background:#a3a3a3"></div>
<div style="position:absolute;left:496px;top:200px;width:1px;height:627px;background:#a3a3a3"></div>
<div style="position:absolute;left:1424px;top:200px;width:1px;height:33px;background:#a3a3a3"></div>
<div class="t" style="left:501.70px;top:209.94px;font-size:14.6px;line-height:14.6px;color:#8c8c8c;font-weight:400;font-family:'Liberation Sans', sans-serif;">Comunicazione generica</div>
<div style="position:absolute;left:497px;top:318px;width:928px;height:1px;background:#a0a0a0"></div>
<div class="t" style="left:610.30px;top:254.80px;font-size:21.5px;line-height:21.5px;color:#000000;font-weight:700;font-family:'Liberation Sans', sans-serif;">Modello di testo</div>
<div class="t" style="left:609.20px;top:285.83px;font-size:13.2px;line-height:13.2px;color:#161616;font-weight:400;font-family:'Liberation Sans', sans-serif;">Scegli il modello più adatto al tipo di comunicazione che stai inviando</div>
<div class="t" style="left:511.50px;top:336.58px;font-size:12.9px;line-height:12.9px;color:#161616;font-weight:400;font-family:'Liberation Sans', sans-serif;">Modelli disponibili per il condominio</div>
<div style="position:absolute;left:723px;top:328px;width:282px;height:26px;background:#e1e1e1;box-sizing:border-box;border:1px solid #adadad"></div>
<div class="t" style="left:728.30px;top:335.10px;font-size:13.7px;line-height:13.7px;color:#161616;font-weight:400;font-family:'Liberation Sans', sans-serif;">- Tutti i condomini attivi -</div>
<svg style="position:absolute;left:987px;top:338px" width="12" height="7" viewBox="0 0 12 7"><polyline points="1,1 6,6 11,1" fill="none" stroke="#3a3a3a" stroke-width="1.2"/></svg>
<div style="position:absolute;left:510px;top:367px;width:901px;height:384px;background:#ffffff;box-sizing:border-box;border:1px solid #a6a6a6"></div>
<div style="position:absolute;left:511px;top:368px;width:876px;height:26px;background:#f0f0f0"></div>
<div style="position:absolute;left:590px;top:370px;width:1px;height:24px;background:#c0c0c0"></div>
<div style="position:absolute;left:990px;top:370px;width:1px;height:24px;background:#c0c0c0"></div>
<div style="position:absolute;left:1285px;top:370px;width:1px;height:24px;background:#c0c0c0"></div>
<div class="t" style="left:517.50px;top:374.82px;font-size:13.5px;line-height:13.5px;color:#161616;font-weight:400;font-family:'Liberation Sans', sans-serif;">Tipo</div>
<div class="t" style="left:596.00px;top:374.82px;font-size:13.5px;line-height:13.5px;color:#161616;font-weight:400;font-family:'Liberation Sans', sans-serif;">Modello</div>
<div class="t" style="left:995.60px;top:374.82px;font-size:13.5px;line-height:13.5px;color:#161616;font-weight:400;font-family:'Liberation Sans', sans-serif;">Esclusivo di ...</div>
<div style="position:absolute;left:1387px;top:369px;width:22px;height:380px;background:#c8c8c8"></div>
<div style="position:absolute;left:511px;top:394px;width:876px;height:24px;background:#0078d7"></div>
<div style="position:absolute;left:511px;top:418px;width:876px;height:1px;background:#c8c8c8"></div>
<div style="position:absolute;left:590px;top:394px;width:1px;height:25px;background:#c8c8c8"></div>
<div style="position:absolute;left:990px;top:394px;width:1px;height:25px;background:#c8c8c8"></div>
<div style="position:absolute;left:1285px;top:394px;width:1px;height:25px;background:#c8c8c8"></div>
<div class="t" style="left:517.20px;top:399.36px;font-size:14.1px;line-height:14.1px;color:#ffffff;font-weight:400;font-family:'Liberation Sans', sans-serif;">Lettera</div>
<div class="t" style="left:596.40px;top:399.96px;font-size:13.4px;line-height:13.4px;color:#ffffff;font-weight:400;font-family:'Liberation Sans', sans-serif;">Acquisizione dati anagrafe condominiale + inform. privacy (GDPR)</div>
<div class="t" style="left:1292.30px;top:400.07px;font-size:13.5px;line-height:13.5px;color:#ffffff;font-weight:400;font-family:'Liberation Sans', sans-serif;text-decoration:underline;">Impostazioni</div>
<div style="position:absolute;left:511px;top:419px;width:79px;height:24px;background:#fffff0"></div>
<div style="position:absolute;left:591px;top:419px;width:399px;height:24px;background:#fffff0"></div>
<div style="position:absolute;left:991px;top:419px;width:294px;height:24px;background:#f0f0f0"></div>
<div style="position:absolute;left:1286px;top:419px;width:101px;height:24px;background:#ffffff"></div>
<div style="position:absolute;left:511px;top:443px;width:876px;height:1px;background:#c8c8c8"></div>
<div style="position:absolute;left:590px;top:419px;width:1px;height:25px;background:#c8c8c8"></div>
<div style="position:absolute;left:990px;top:419px;width:1px;height:25px;background:#c8c8c8"></div>
<div style="position:absolute;left:1285px;top:419px;width:1px;height:25px;background:#c8c8c8"></div>
<div class="t" style="left:517.20px;top:424.36px;font-size:14.1px;line-height:14.1px;color:#161616;font-weight:400;font-family:'Liberation Sans', sans-serif;">Lettera</div>
<div class="t" style="left:596.40px;top:424.96px;font-size:13.4px;line-height:13.4px;color:#161616;font-weight:400;font-family:'Liberation Sans', sans-serif;">Attivare l&#x27;addebito ricorrente tramite TS Pay</div>
<div class="t" style="left:1292.30px;top:425.07px;font-size:13.5px;line-height:13.5px;color:#1a1aff;font-weight:400;font-family:'Liberation Sans', sans-serif;text-decoration:underline;">Impostazioni</div>
<div style="position:absolute;left:511px;top:444px;width:79px;height:24px;background:#fffff0"></div>
<div style="position:absolute;left:591px;top:444px;width:399px;height:24px;background:#fffff0"></div>
<div style="position:absolute;left:991px;top:444px;width:294px;height:24px;background:#f0f0f0"></div>
<div style="position:absolute;left:1286px;top:444px;width:101px;height:24px;background:#ffffff"></div>
<div style="position:absolute;left:511px;top:468px;width:876px;height:1px;background:#c8c8c8"></div>
<div style="position:absolute;left:590px;top:444px;width:1px;height:25px;background:#c8c8c8"></div>
<div style="position:absolute;left:990px;top:444px;width:1px;height:25px;background:#c8c8c8"></div>
<div style="position:absolute;left:1285px;top:444px;width:1px;height:25px;background:#c8c8c8"></div>
<div class="t" style="left:517.20px;top:449.36px;font-size:14.1px;line-height:14.1px;color:#161616;font-weight:400;font-family:'Liberation Sans', sans-serif;">Lettera</div>
<div class="t" style="left:596.40px;top:449.96px;font-size:13.4px;line-height:13.4px;color:#161616;font-weight:400;font-family:'Liberation Sans', sans-serif;">Chiusura uffici periodo estivo</div>
<div class="t" style="left:1292.30px;top:450.07px;font-size:13.5px;line-height:13.5px;color:#1a1aff;font-weight:400;font-family:'Liberation Sans', sans-serif;text-decoration:underline;">Impostazioni</div>
<div style="position:absolute;left:511px;top:469px;width:79px;height:24px;background:#fffff0"></div>
<div style="position:absolute;left:591px;top:469px;width:399px;height:24px;background:#fffff0"></div>
<div style="position:absolute;left:991px;top:469px;width:294px;height:24px;background:#f0f0f0"></div>
<div style="position:absolute;left:1286px;top:469px;width:101px;height:24px;background:#ffffff"></div>
<div style="position:absolute;left:511px;top:493px;width:876px;height:1px;background:#c8c8c8"></div>
<div style="position:absolute;left:590px;top:469px;width:1px;height:25px;background:#c8c8c8"></div>
<div style="position:absolute;left:990px;top:469px;width:1px;height:25px;background:#c8c8c8"></div>
<div style="position:absolute;left:1285px;top:469px;width:1px;height:25px;background:#c8c8c8"></div>
<div class="t" style="left:517.20px;top:474.36px;font-size:14.1px;line-height:14.1px;color:#161616;font-weight:400;font-family:'Liberation Sans', sans-serif;">Lettera</div>
<div class="t" style="left:596.40px;top:474.96px;font-size:13.4px;line-height:13.4px;color:#161616;font-weight:400;font-family:'Liberation Sans', sans-serif;">Chiusura uffici periodo natalizio</div>
<div class="t" style="left:1292.30px;top:475.07px;font-size:13.5px;line-height:13.5px;color:#1a1aff;font-weight:400;font-family:'Liberation Sans', sans-serif;text-decoration:underline;">Impostazioni</div>
<div style="position:absolute;left:511px;top:494px;width:79px;height:24px;background:#fffff0"></div>
<div style="position:absolute;left:591px;top:494px;width:399px;height:24px;background:#fffff0"></div>
<div style="position:absolute;left:991px;top:494px;width:294px;height:24px;background:#f0f0f0"></div>
<div style="position:absolute;left:1286px;top:494px;width:101px;height:24px;background:#ffffff"></div>
<div style="position:absolute;left:511px;top:518px;width:876px;height:1px;background:#c8c8c8"></div>
<div style="position:absolute;left:590px;top:494px;width:1px;height:25px;background:#c8c8c8"></div>
<div style="position:absolute;left:990px;top:494px;width:1px;height:25px;background:#c8c8c8"></div>
<div style="position:absolute;left:1285px;top:494px;width:1px;height:25px;background:#c8c8c8"></div>
<div class="t" style="left:517.20px;top:499.36px;font-size:14.1px;line-height:14.1px;color:#161616;font-weight:400;font-family:'Liberation Sans', sans-serif;">Lettera</div>
<div class="t" style="left:596.40px;top:499.96px;font-size:13.4px;line-height:13.4px;color:#161616;font-weight:400;font-family:'Liberation Sans', sans-serif;">Informativa sul trattamento dei dati dei condòmini (GDPR)</div>
<div class="t" style="left:1292.30px;top:500.07px;font-size:13.5px;line-height:13.5px;color:#1a1aff;font-weight:400;font-family:'Liberation Sans', sans-serif;text-decoration:underline;">Impostazioni</div>
<div style="position:absolute;left:511px;top:519px;width:79px;height:24px;background:#fffff0"></div>
<div style="position:absolute;left:591px;top:519px;width:399px;height:24px;background:#fffff0"></div>
<div style="position:absolute;left:991px;top:519px;width:294px;height:24px;background:#f0f0f0"></div>
<div style="position:absolute;left:1286px;top:519px;width:101px;height:24px;background:#ffffff"></div>
<div style="position:absolute;left:511px;top:543px;width:876px;height:1px;background:#c8c8c8"></div>
<div style="position:absolute;left:590px;top:519px;width:1px;height:25px;background:#c8c8c8"></div>
<div style="position:absolute;left:990px;top:519px;width:1px;height:25px;background:#c8c8c8"></div>
<div style="position:absolute;left:1285px;top:519px;width:1px;height:25px;background:#c8c8c8"></div>
<div class="t" style="left:517.20px;top:524.36px;font-size:14.1px;line-height:14.1px;color:#161616;font-weight:400;font-family:'Liberation Sans', sans-serif;">Lettera</div>
<div class="t" style="left:596.40px;top:524.96px;font-size:13.4px;line-height:13.4px;color:#161616;font-weight:400;font-family:'Liberation Sans', sans-serif;">Richiesta conferma dati delle unità immobiliari</div>
<div class="t" style="left:1292.30px;top:525.07px;font-size:13.5px;line-height:13.5px;color:#1a1aff;font-weight:400;font-family:'Liberation Sans', sans-serif;text-decoration:underline;">Impostazioni</div>
<div class="t" style="left:546.00px;top:762.00px;font-size:13.0px;line-height:13.0px;color:#161624;font-weight:400;font-family:'Liberation Sans', sans-serif;">Nuovo</div>
<div class="t" style="left:634.70px;top:762.00px;font-size:13.0px;line-height:13.0px;color:#161624;font-weight:400;font-family:'Liberation Sans', sans-serif;">Duplica</div>
<div class="t" style="left:727.40px;top:762.00px;font-size:13.0px;line-height:13.0px;color:#161624;font-weight:400;font-family:'Liberation Sans', sans-serif;">Elimina</div>
<div class="t" style="left:818.00px;top:762.00px;font-size:13.0px;line-height:13.0px;color:#161624;font-weight:400;font-family:'Liberation Sans', sans-serif;">Cerca</div>
<div class="t" style="left:907.00px;top:762.00px;font-size:13.0px;line-height:13.0px;color:#161624;font-weight:400;font-family:'Liberation Sans', sans-serif;">Vedi modello</div>
<div style="position:absolute;left:867px;top:752px;width:1px;height:30px;background:#a0a0a0"></div>
<div style="position:absolute;left:868px;top:752px;width:1px;height:30px;background:#ffffff"></div>
<div style="position:absolute;left:497px;top:795px;width:928px;height:1px;background:#a0a0a0"></div>
<div style="position:absolute;left:497px;top:796px;width:928px;height:1px;background:#ffffff"></div>
<div style="position:absolute;left:1229px;top:797px;width:1px;height:27px;background:#a0a0a0"></div>
<div class="t" style="left:1260.70px;top:806.60px;font-size:13.7px;line-height:13.7px;color:#161624;font-weight:400;font-family:'Liberation Sans', sans-serif;">Avanti</div>
<div class="t" style="left:1358.40px;top:806.86px;font-size:13.4px;line-height:13.4px;color:#161624;font-weight:400;font-family:'Liberation Sans', sans-serif;">Annulla</div>
<svg style="position:absolute;left:15px;top:1005px" width="17" height="15" viewBox="0 0 17 15"><defs><linearGradient id="nw" x1="0" y1="0" x2="0" y2="1"><stop offset="0" stop-color="#4f8fd6"/><stop offset="1" stop-color="#a9d6fb"/></linearGradient></defs><rect x="0.8" y="3.8" width="12.5" height="9.5" rx="1" fill="url(#nw)" stroke="#2a5f9e" stroke-width="1.2"/><rect x="2" y="5.5" width="10" height="1.5" fill="#dbeeff" opacity="0.6"/><circle cx="12.5" cy="3.5" r="3.3" fill="#ffd75a" stroke="#f0a020" stroke-width="0.8"/><circle cx="12.5" cy="3.5" r="1.2" fill="#fff6c8"/></svg>
<div style="position:absolute;left:61px;top:1022px;width:8px;height:1px;background:#1a1a24"></div>
<svg style="position:absolute;left:135.5px;top:1005px" width="21" height="17" viewBox="0 0 21 17"><polygon points="1,15.5 3,10 15,1.5 19.5,4.5 7.5,13.5" fill="#8c8c8c" stroke="#5a5a5a" stroke-width="0.9"/><polygon points="3,10 15,1.5 16.5,2.5 4.5,11" fill="#c4c4c4"/><polygon points="1,15.5 2,12.5 4.5,14" fill="#404040"/></svg>
<div style="position:absolute;left:160.6px;top:1022px;width:10.5px;height:1px;background:#8f8f8f"></div>
<svg style="position:absolute;left:230.5px;top:1003.5px" width="18" height="20" viewBox="0 0 18 20"><defs><linearGradient id="tr" x1="0" y1="0" x2="1" y2="0"><stop offset="0" stop-color="#bdbdbd"/><stop offset="0.45" stop-color="#f7f7f7"/><stop offset="1" stop-color="#9a9a9a"/></linearGradient></defs><path d="M1.5 3 L3.5 18.5 Q9 20 14.5 18.5 L16.5 3 Z" fill="url(#tr)" stroke="#7a7a7a" stroke-width="0.9"/><ellipse cx="9" cy="3" rx="7.8" ry="2.2" fill="#e9e9e9" stroke="#7a7a7a" stroke-width="0.9"/><path d="M6 10 L9 7 L12 10 M7 13 L11 13 L9 15.5 Z" fill="#6a6a6a" stroke="#6a6a6a" stroke-width="1.2"/></svg>
<div style="position:absolute;left:261px;top:1022px;width:3px;height:1px;background:#8f8f8f"></div>
<svg style="position:absolute;left:320.5px;top:1006px" width="16" height="15" viewBox="0 0 16 15"><rect x="4.5" y="0.5" width="10.5" height="9" fill="none" stroke="#5a5a5a" stroke-width="1" stroke-dasharray="1.2 1"/><rect x="0.8" y="5.3" width="10.5" height="8.7" rx="1.2" fill="#d0d0d0" stroke="#5a5a5a" stroke-width="1.3"/></svg>
<div style="position:absolute;left:342.5px;top:1022px;width:10px;height:1px;background:#8f8f8f"></div>
<svg style="position:absolute;left:403.5px;top:1003.5px" width="21" height="21" viewBox="0 0 21 21"><defs><radialGradient id="lens" cx="0.4" cy="0.35" r="0.7"><stop offset="0" stop-color="#ffffff"/><stop offset="1" stop-color="#a9d4f2"/></radialGradient></defs><line x1="2.5" y1="18.5" x2="8" y2="12.5" stroke="#6a4a20" stroke-width="3.6" stroke-linecap="round"/><line x1="2.5" y1="18.5" x2="8" y2="12.5" stroke="#c89a58" stroke-width="2" stroke-linecap="round"/><circle cx="13" cy="7.5" r="6" fill="url(#lens)" stroke="#555c63" stroke-width="1.6"/></svg>
<svg style="position:absolute;left:490.5px;top:1004.5px" width="21" height="18" viewBox="0 0 21 18"><polygon points="7,1 18,1 19,7 8,7" fill="#d9d9d9" stroke="#777" stroke-width="0.8"/><path d="M1 8 L17 5 L20 7 L20 12 L5 15.5 L1 13 Z" fill="#5c9bd6" stroke="#3b5f86" stroke-width="0.8"/><polygon points="1,8 17,5 20,7 4,10" fill="#a9d0f3"/><polygon points="4,13.5 15,11 16.5,15.5 5.5,17.5" fill="#f7f7f7" stroke="#8a8a8a" stroke-width="0.8"/></svg>
<div style="position:absolute;left:547px;top:1022px;width:8px;height:1px;background:#1a1a24"></div>
<svg style="position:absolute;left:581px;top:1004px" width="21" height="20" viewBox="0 0 21 20"><rect x="0.8" y="0.8" width="19.4" height="18.4" fill="#f4faf2" stroke="#2c8a3a" stroke-width="1.6"/><rect x="2" y="2" width="17" height="16" fill="#d8eed6"/><path d="M5 4.5 L9 10 L5 15.5 L8 15.5 L10.5 11.8 L13 15.5 L16 15.5 L12 10 L16 4.5 L13 4.5 L10.5 8.2 L8 4.5 Z" fill="#2e9a3c"/></svg>
<svg style="position:absolute;left:665px;top:1004px" width="20" height="20" viewBox="0 0 20 20"><rect x="0.8" y="3" width="16" height="16.2" fill="#f7f7f7" stroke="#8a8a8a" stroke-width="0.9"/><rect x="0.8" y="3" width="16" height="4" fill="#e0312a"/><rect x="3.5" y="0.5" width="1.8" height="4" fill="#8a2a2a"/><rect x="11.5" y="0.5" width="1.8" height="4" fill="#8a2a2a"/><g stroke="#c8c8c8" stroke-width="0.9"><line x1="3" y1="10" x2="10" y2="10"/><line x1="3" y1="13" x2="10" y2="13"/><line x1="3" y1="16" x2="10" y2="16"/></g><polygon points="9,11.5 14,11.5 14,9 19,13.5 14,18 14,15.5 9,15.5" fill="#ffffff" stroke="#8a8a8a" stroke-width="0.9"/></svg>
<svg style="position:absolute;left:1892px;top:1003px" width="18" height="21" viewBox="0 0 18 21"><rect x="1" y="0.5" width="16" height="1.8" fill="#6a7a8a"/><rect x="2" y="2" width="14" height="17" fill="#f7fbff" stroke="#9aa9b8" stroke-width="0.6"/><rect x="3" y="3.5" width="2.2" height="2.2" fill="#1a7fe6"/><rect x="7" y="3.5" width="4" height="2.2" fill="#1a7fe6"/><rect x="12.8" y="3.5" width="2.2" height="2.2" fill="#1a7fe6"/><rect x="3" y="7" width="2.2" height="2.2" fill="#1a7fe6"/><rect x="7" y="7" width="4" height="2.2" fill="#1a7fe6"/><rect x="12.8" y="7" width="2.2" height="2.2" fill="#1a7fe6"/><rect x="3" y="10.5" width="2.2" height="2.2" fill="#1a7fe6"/><rect x="7" y="10.5" width="4" height="2.2" fill="#1a7fe6"/><rect x="12.8" y="10.5" width="2.2" height="2.2" fill="#1a7fe6"/><rect x="3" y="14" width="2.2" height="2.2" fill="#1a7fe6"/><rect x="7" y="14" width="4" height="2.2" fill="#1a7fe6"/><rect x="12.8" y="14" width="2.2" height="2.2" fill="#1a7fe6"/><rect x="7" y="14" width="4" height="5" fill="#5f6f7f"/><rect x="0" y="19" width="18" height="1.6" fill="#6a7a8a"/></svg>
<svg style="position:absolute;left:1893px;top:319px" width="22" height="22" viewBox="0 0 22 22"><defs><linearGradient id="srt" x1="0" y1="0" x2="1" y2="0"><stop offset="0" stop-color="#2a6fc0"/><stop offset="0.5" stop-color="#6fb6f2"/><stop offset="1" stop-color="#1b5aa6"/></linearGradient></defs><polygon points="6,1 11.5,7.5 8.5,7.5 8.5,20.5 3.5,20.5 3.5,7.5 0.5,7.5" fill="url(#srt)" stroke="#1c4f8a" stroke-width="0.6"/><text x="13" y="10" font-family="Liberation Sans" font-weight="700" font-style="italic" font-size="10.5" fill="#6d7f93">Z</text><text x="12.5" y="20" font-family="Liberation Sans" font-weight="700" font-style="italic" font-size="10.5" fill="#6d7f93">A</text></svg>
<svg style="position:absolute;left:525px;top:246px" width="56" height="62" viewBox="0 0 56 62"><defs><linearGradient id="pg" x1="0" y1="0" x2="1" y2="1"><stop offset="0" stop-color="#ffffff"/><stop offset="1" stop-color="#dfe9f3"/></linearGradient></defs><path d="M17.5 1.5 H41.5 L53 12.5 V46.5 H17.5 Z" fill="url(#pg)" stroke="#8a8a8a" stroke-width="1.4"/><path d="M41.5 1.5 V12.5 H53" fill="#e9eef3" stroke="#9a9a9a" stroke-width="1"/><line x1="37" y1="19" x2="48" y2="19" stroke="#c4c9ce" stroke-width="0.9"/><line x1="37" y1="21" x2="48" y2="21" stroke="#c4c9ce" stroke-width="0.9"/><line x1="37" y1="25" x2="48" y2="25" stroke="#c4c9ce" stroke-width="0.9"/><line x1="37" y1="27" x2="48" y2="27" stroke="#c4c9ce" stroke-width="0.9"/><line x1="37" y1="31" x2="48" y2="31" stroke="#c4c9ce" stroke-width="0.9"/><line x1="37" y1="33" x2="48" y2="33" stroke="#c4c9ce" stroke-width="0.9"/><line x1="37" y1="37" x2="48" y2="37" stroke="#c4c9ce" stroke-width="0.9"/><line x1="37" y1="39" x2="48" y2="39" stroke="#c4c9ce" stroke-width="0.9"/><path d="M1.5 13.5 H23.5 L35.5 25.5 V59.5 H1.5 Z" fill="url(#pg)" stroke="#8a8a8a" stroke-width="1.4"/><path d="M23.5 13.5 V25.5 H35.5" fill="#e9eef3" stroke="#9a9a9a" stroke-width="1"/><line x1="5" y1="31" x2="30" y2="31" stroke="#c0c5ca" stroke-width="0.9"/><line x1="5" y1="33" x2="30" y2="33" stroke="#c0c5ca" stroke-width="0.9"/><line x1="5" y1="37" x2="30" y2="37" stroke="#c0c5ca" stroke-width="0.9"/><line x1="5" y1="39" x2="30" y2="39" stroke="#c0c5ca" stroke-width="0.9"/><line x1="5" y1="41" x2="30" y2="41" stroke="#c0c5ca" stroke-width="0.9"/><line x1="5" y1="45" x2="30" y2="45" stroke="#c0c5ca" stroke-width="0.9"/><line x1="5" y1="47" x2="30" y2="47" stroke="#c0c5ca" stroke-width="0.9"/><line x1="5" y1="51" x2="30" y2="51" stroke="#c0c5ca" stroke-width="0.9"/><line x1="5" y1="53" x2="30" y2="53" stroke="#c0c5ca" stroke-width="0.9"/></svg>
<svg style="position:absolute;left:525px;top:758px" width="17" height="15" viewBox="0 0 17 15"><defs><linearGradient id="nw" x1="0" y1="0" x2="0" y2="1"><stop offset="0" stop-color="#4f8fd6"/><stop offset="1" stop-color="#a9d6fb"/></linearGradient></defs><rect x="0.8" y="3.8" width="12.5" height="9.5" rx="1" fill="url(#nw)" stroke="#2a5f9e" stroke-width="1.2"/><rect x="2" y="5.5" width="10" height="1.5" fill="#dbeeff" opacity="0.6"/><circle cx="12.5" cy="3.5" r="3.3" fill="#ffd75a" stroke="#f0a020" stroke-width="0.8"/><circle cx="12.5" cy="3.5" r="1.2" fill="#fff6c8"/></svg>
<div style="position:absolute;left:570px;top:775px;width:7.5px;height:1px;background:#1a1a24"></div>
<svg style="position:absolute;left:612.5px;top:757.5px" width="16" height="15" viewBox="0 0 16 15"><rect x="4.5" y="0.5" width="10.5" height="9" fill="none" stroke="#2a5f9e" stroke-width="1" stroke-dasharray="1.2 1"/><rect x="0.8" y="5.3" width="10.5" height="8.7" rx="1.2" fill="#8fc0ee" stroke="#2a5f9e" stroke-width="1.3"/></svg>
<div style="position:absolute;left:634.5px;top:775px;width:10px;height:1px;background:#1a1a24"></div>
<svg style="position:absolute;left:704.5px;top:757px" width="18" height="20" viewBox="0 0 18 20"><defs><linearGradient id="tr" x1="0" y1="0" x2="1" y2="0"><stop offset="0" stop-color="#bdbdbd"/><stop offset="0.45" stop-color="#f7f7f7"/><stop offset="1" stop-color="#9a9a9a"/></linearGradient></defs><path d="M1.5 3 L3.5 18.5 Q9 20 14.5 18.5 L16.5 3 Z" fill="url(#tr)" stroke="#7a7a7a" stroke-width="0.9"/><ellipse cx="9" cy="3" rx="7.8" ry="2.2" fill="#e9e9e9" stroke="#7a7a7a" stroke-width="0.9"/><path d="M6 10 L9 7 L12 10 M7 13 L11 13 L9 15.5 Z" fill="#3aa23a" stroke="#3aa23a" stroke-width="1.2"/></svg>
<div style="position:absolute;left:736px;top:775px;width:3px;height:1px;background:#1a1a24"></div>
<svg style="position:absolute;left:792.5px;top:756.5px" width="21" height="21" viewBox="0 0 21 21"><defs><radialGradient id="lens" cx="0.4" cy="0.35" r="0.7"><stop offset="0" stop-color="#ffffff"/><stop offset="1" stop-color="#a9d4f2"/></radialGradient></defs><line x1="2.5" y1="18.5" x2="8" y2="12.5" stroke="#6a4a20" stroke-width="3.6" stroke-linecap="round"/><line x1="2.5" y1="18.5" x2="8" y2="12.5" stroke="#c89a58" stroke-width="2" stroke-linecap="round"/><circle cx="13" cy="7.5" r="6" fill="url(#lens)" stroke="#555c63" stroke-width="1.6"/></svg>
<svg style="position:absolute;left:884px;top:757px" width="18" height="20" viewBox="0 0 18 20"><path d="M0.5 0.5 H10 L14.5 5 V18.5 H0.5 Z" fill="#fbfbfb" stroke="#7d8b99" stroke-width="1"/><path d="M10 0.5 V5 H14.5" fill="#dde6ef" stroke="#7d8b99" stroke-width="0.8"/><circle cx="7.5" cy="10.5" r="3.8" fill="#cfe6f7" stroke="#4f6f90" stroke-width="1.2"/><line x1="10.5" y1="13.5" x2="14" y2="17" stroke="#f08a2a" stroke-width="2.4" stroke-linecap="round"/></svg>
<svg style="position:absolute;left:1203.8px;top:802px" width="20" height="20" viewBox="0 0 20 20"><defs><radialGradient id="rghelp" cx="0.4" cy="0.3" r="0.75"><stop offset="0" stop-color="#82c4f2"/><stop offset="1" stop-color="#2a72c0"/></radialGradient></defs><circle cx="10" cy="10" r="9" fill="url(#rghelp)" stroke="#6f6f6f" stroke-width="1.6"/><path d="M7.3 8 Q7.3 4.6 10.2 4.6 Q13.2 4.6 13.2 7.3 Q13.2 9 11.4 9.9 Q10.7 10.3 10.7 11.6 L9.3 11.6 Q9.2 9.5 10.6 8.7 Q11.6 8.1 11.6 7.3 Q11.6 6.1 10.2 6.1 Q8.9 6.1 8.8 8 Z" fill="#fff"/><circle cx="10" cy="14" r="1.2" fill="#fff"/></svg>
<svg style="position:absolute;left:1236px;top:802px" width="20" height="20" viewBox="0 0 20 20"><defs><radialGradient id="rgok" cx="0.4" cy="0.3" r="0.75"><stop offset="0" stop-color="#9ee08a"/><stop offset="1" stop-color="#3f9e2e"/></radialGradient></defs><circle cx="10" cy="10" r="9" fill="url(#rgok)" stroke="#6f6f6f" stroke-width="1.6"/><path d="M4.5 10 H12.5 M9.5 6 L13.5 10 L9.5 14" stroke="#fff" stroke-width="2.4" fill="none" stroke-linecap="round" stroke-linejoin="round"/></svg>
<div style="position:absolute;left:1261px;top:820px;width:9px;height:1px;background:#1a1a24"></div>
<svg style="position:absolute;left:1329px;top:802px" width="20" height="20" viewBox="0 0 20 20"><defs><radialGradient id="rgx" cx="0.4" cy="0.3" r="0.75"><stop offset="0" stop-color="#ff8a80"/><stop offset="1" stop-color="#d81e16"/></radialGradient></defs><circle cx="10" cy="10" r="9" fill="url(#rgx)" stroke="#6f6f6f" stroke-width="1.6"/><path d="M6.5 6.5 L13.5 13.5 M13.5 6.5 L6.5 13.5" stroke="#fff" stroke-width="2.8" stroke-linecap="round"/></svg>
</body></html>
